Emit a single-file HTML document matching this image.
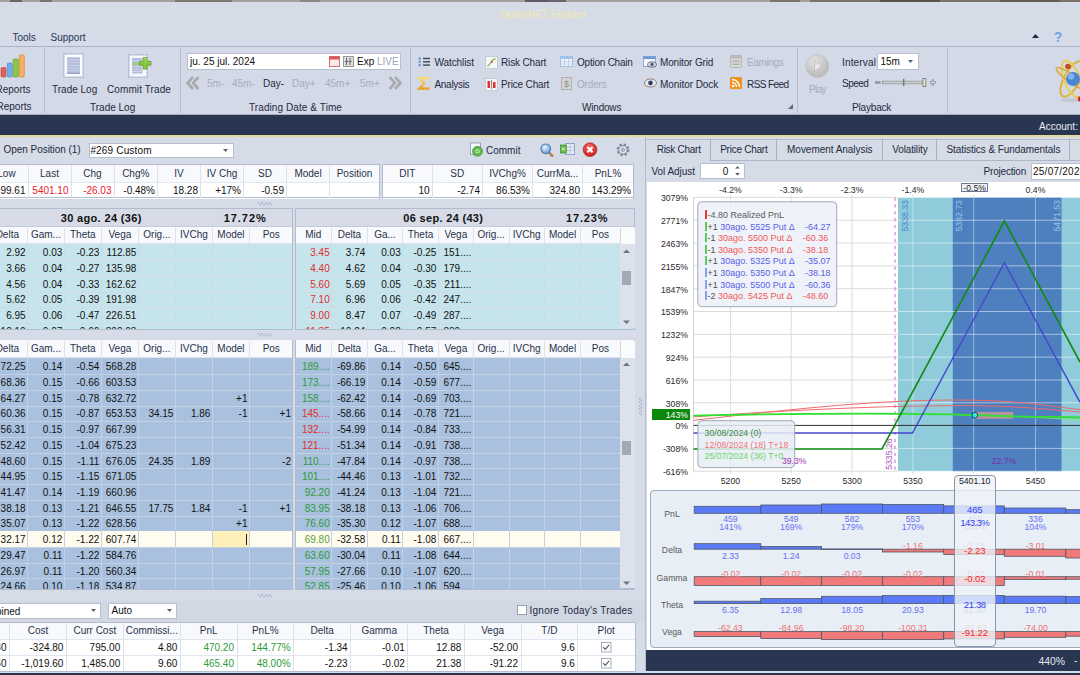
<!DOCTYPE html><html><head><meta charset="utf-8"><style>
html,body{margin:0;padding:0;}
body{width:1080px;height:675px;overflow:hidden;position:relative;background:#d5dbe7;font-family:"Liberation Sans",sans-serif;}
.t{position:absolute;white-space:nowrap;}
.r{position:absolute;}
.box{position:absolute;box-sizing:border-box;}
svg{position:absolute;overflow:visible;}
</style></head><body>
<div class="r" style="left:0.00px;top:0.00px;width:1080.00px;height:2.00px;background:#a3a19b;"></div>
<div class="r" style="left:10.00px;top:0.00px;width:12.00px;height:2.00px;background:#6a6862;"></div>
<div class="r" style="left:40.00px;top:0.00px;width:12.00px;height:2.00px;background:#77756f;"></div>
<div class="r" style="left:175.00px;top:0.00px;width:57.00px;height:2.00px;background:#7a7670;"></div>
<div class="r" style="left:300.00px;top:0.00px;width:20.00px;height:2.00px;background:#8a8882;"></div>
<div class="r" style="left:525.00px;top:0.00px;width:23.00px;height:2.00px;background:#5e5866;"></div>
<div class="r" style="left:548.00px;top:0.00px;width:18.00px;height:2.00px;background:#6a6470;"></div>
<div class="r" style="left:770.00px;top:0.00px;width:30.00px;height:2.00px;background:#7a746c;"></div>
<div class="r" style="left:810.00px;top:0.00px;width:270.00px;height:2.00px;background:#7c7268;"></div>
<div class="r" style="left:880.00px;top:0.00px;width:60.00px;height:2.00px;background:#5a524c;"></div>
<div class="r" style="left:1000.00px;top:0.00px;width:60.00px;height:2.00px;background:#645c56;"></div>
<div class="t" style="left:343.00px;width:400px;text-align:center;top:9.70px;font-size:10px;line-height:10px;color:#f1e9ad;font-weight:normal;letter-spacing:-0.144px;">OptionNET Explorer</div>
<div class="t" style="left:12.50px;top:33.20px;font-size:10px;line-height:10px;color:#2a3653;font-weight:normal;">Tools</div>
<div class="t" style="left:50.50px;top:33.20px;font-size:10px;line-height:10px;color:#2a3653;font-weight:normal;">Support</div>
<svg style="left:1032px;top:34px" width="8" height="5"><path d="M0 4 L3.5 0 L7 4Z" fill="#1c2a48"/></svg>
<svg style="left:1052px;top:30px" width="12" height="14"><text x="6" y="12" font-family="Liberation Sans" font-weight="bold" font-size="14" text-anchor="middle" fill="#6fa8e0">?</text></svg>
<div class="r" style="left:0.00px;top:46.00px;width:1080.00px;height:1.00px;background:#aab3c4;"></div>
<div class="r" style="left:0.00px;top:47.00px;width:1080.00px;height:67.00px;background:#d3d9e6;"></div>
<div class="r" style="left:0.00px;top:114.00px;width:1080.00px;height:1.00px;background:#a7afbe;"></div>
<div class="r" style="left:44.00px;top:48.00px;width:1.00px;height:65.00px;background:#b4bccb;"></div>
<div class="r" style="left:180.00px;top:48.00px;width:1.00px;height:65.00px;background:#b4bccb;"></div>
<div class="r" style="left:410.00px;top:48.00px;width:1.00px;height:65.00px;background:#b4bccb;"></div>
<div class="r" style="left:797.00px;top:48.00px;width:1.00px;height:65.00px;background:#b4bccb;"></div>
<div class="r" style="left:947.00px;top:48.00px;width:1.00px;height:65.00px;background:#b4bccb;"></div>
<svg style="left:0;top:54px" width="26" height="25">
<rect x="1" y="13.5" width="5" height="9.5" rx="1" fill="#e0605a" stroke="#c04840" stroke-width="0.6"/>
<rect x="7.2" y="9" width="5" height="14" rx="1" fill="#70aee8" stroke="#4a86c8" stroke-width="0.6"/>
<rect x="13.3" y="5" width="5" height="18" rx="1" fill="#8cc84a" stroke="#5a9a2a" stroke-width="0.6"/>
<rect x="19.3" y="1" width="5" height="22" rx="1" fill="#f4b060" stroke="#d08030" stroke-width="0.6"/>
</svg>
<div class="t" style="left:-4.50px;top:84.70px;font-size:10px;line-height:10px;color:#1f2a40;font-weight:normal;">Reports</div>
<div class="t" style="left:-3.50px;top:102.20px;font-size:10px;line-height:10px;color:#1f2a40;font-weight:normal;">Reports</div>
<svg style="left:63px;top:53px" width="22" height="26">
<rect x="0.75" y="0.75" width="19.5" height="23.5" fill="#fafbfe" stroke="#b9c2d8" stroke-width="1.5"/>
<rect x="4" y="4.3" width="13" height="16.5" fill="#b3bdd9"/>
<g fill="#d4daea"><rect x="4" y="6.6" width="13" height="0.8"/><rect x="4" y="9.3" width="13" height="0.8"/><rect x="4" y="12" width="13" height="0.8"/><rect x="4" y="14.7" width="13" height="0.8"/><rect x="4" y="17.4" width="13" height="0.8"/></g>
<rect x="4" y="19.8" width="13" height="1" fill="#8f9cc4"/>
</svg>
<div class="t" style="left:52.00px;top:85.20px;font-size:10px;line-height:10px;color:#1f2a40;font-weight:normal;">Trade Log</div>
<svg style="left:128px;top:54px" width="26" height="24">
<rect x="0.75" y="0.75" width="18.5" height="22.5" fill="#f6f8fc" stroke="#b9c2d8" stroke-width="1.5"/>
<rect x="4" y="4" width="10.5" height="15.5" fill="#b3bdd9"/>
<g fill="#d4daea"><rect x="4" y="6.5" width="10.5" height="0.8"/><rect x="4" y="12" width="10.5" height="0.8"/><rect x="4" y="14.7" width="10.5" height="0.8"/><rect x="4" y="17.2" width="10.5" height="0.8"/></g>
<rect x="4" y="9" width="9" height="1.8" fill="#98d060"/>
<path d="M15.3 3.5h3.8v3.9h3.9v3.8h-3.9v3.9h-3.8v-3.9h-3.9v-3.8h3.9z" fill="#86c83e" stroke="#5e9c28" stroke-width="0.8" stroke-linejoin="round"/>
<path d="M16 4.5h2.2v3.6" fill="none" stroke="#c4ec90" stroke-width="0.8"/>
</svg>
<div class="t" style="left:107.00px;top:85.20px;font-size:10px;line-height:10px;color:#1f2a40;font-weight:normal;letter-spacing:0.101px;">Commit Trade</div>
<div class="t" style="left:90.00px;top:102.70px;font-size:10px;line-height:10px;color:#1f2a40;font-weight:normal;">Trade Log</div>
<div class="box" style="left:186.5px;top:53px;width:214px;height:17px;background:#fff;border:1px solid #b8c0d0"></div>
<div class="t" style="left:190.00px;top:57.20px;font-size:10px;line-height:10px;color:#111;font-weight:normal;">ju. 25 jul. 2024</div>
<svg style="left:329px;top:56px" width="12" height="11"><rect x="0.5" y="0.5" width="10" height="10" fill="#fbeaea" stroke="#d07070"/><rect x="0.5" y="0.5" width="10" height="3" fill="#e05858"/></svg>
<svg style="left:343px;top:56px" width="11" height="11"><rect x="0.5" y="0.5" width="10" height="10" fill="#ddd" stroke="#999"/><path d="M3.5 2v7M7 2v7M2 5.5h3M5.5 5.5h3" stroke="#666"/></svg>
<div class="t" style="left:357.00px;top:57.20px;font-size:10px;line-height:10px;color:#111;font-weight:normal;">Exp</div>
<div class="t" style="left:377.00px;top:57.20px;font-size:10px;line-height:10px;color:#9aa4b8;font-weight:normal;">LIVE</div>
<svg style="left:186px;top:76px" width="14" height="14"><path d="M7 1L1.5 7L7 13M12.5 1L7 7L12.5 13" fill="none" stroke="#a9aaae" stroke-width="2.6" stroke-linejoin="miter"/></svg>
<div class="t" style="left:207.00px;top:79.20px;font-size:10px;line-height:10px;color:#a6aec0;font-weight:normal;">5m-</div>
<div class="t" style="left:232.00px;top:79.20px;font-size:10px;line-height:10px;color:#a6aec0;font-weight:normal;">45m-</div>
<div class="t" style="left:263.00px;top:79.20px;font-size:10px;line-height:10px;color:#1f2a40;font-weight:normal;">Day-</div>
<div class="t" style="left:292.00px;top:79.20px;font-size:10px;line-height:10px;color:#a6aec0;font-weight:normal;">Day+</div>
<div class="t" style="left:325.00px;top:79.20px;font-size:10px;line-height:10px;color:#a6aec0;font-weight:normal;">45m+</div>
<div class="t" style="left:360.00px;top:79.20px;font-size:10px;line-height:10px;color:#a6aec0;font-weight:normal;">5m+</div>
<svg style="left:388px;top:76px" width="14" height="14"><path d="M1.5 1L7 7L1.5 13M7 1L12.5 7L7 13" fill="none" stroke="#a9aaae" stroke-width="2.6"/></svg>
<div class="t" style="left:249.00px;top:102.70px;font-size:10px;line-height:10px;color:#1f2a40;font-weight:normal;letter-spacing:0.088px;">Trading Date &amp; Time</div>
<svg style="left:418px;top:57px" width="14" height="10"><g fill="#6a9ad8"><circle cx="1.7" cy="1.5" r="1.3"/><circle cx="1.7" cy="4.8" r="1.3"/><circle cx="1.7" cy="8.1" r="1.3"/></g><g fill="#404858"><rect x="5" y="0.8" width="7" height="1.4"/><rect x="5" y="4.1" width="7" height="1.4"/><rect x="5" y="7.4" width="7" height="1.4"/></g></svg>
<div class="t" style="left:434.50px;top:57.70px;font-size:10px;line-height:10px;color:#1f2a40;font-weight:normal;letter-spacing:-0.088px;">Watchlist</div>
<svg style="left:418px;top:77px" width="13" height="13"><defs><linearGradient id="sg" x1="0" y1="0" x2="0" y2="1"><stop offset="0" stop-color="#fadc70"/><stop offset="1" stop-color="#eca028"/></linearGradient></defs><path d="M11.6 1.1H1.2L6.3 6.3L1.2 11.5H11.6" fill="none" stroke="url(#sg)" stroke-width="2.3" stroke-linejoin="miter"/></svg>
<div class="t" style="left:434.50px;top:79.70px;font-size:10px;line-height:10px;color:#1f2a40;font-weight:normal;letter-spacing:-0.304px;">Analysis</div>
<svg style="left:485px;top:56px" width="13" height="13"><rect x="0.5" y="0.5" width="12" height="12" fill="#f4f6f8" stroke="#c4cad6"/><path d="M2 10 Q4 10 5.5 7 T9 3 L11 3" fill="none" stroke="#70b050" stroke-width="1.1"/><circle cx="7" cy="6" r="0.9" fill="#e04040"/></svg>
<div class="t" style="left:501.00px;top:57.70px;font-size:10px;line-height:10px;color:#1f2a40;font-weight:normal;letter-spacing:-0.147px;">Risk Chart</div>
<svg style="left:485px;top:78px" width="13" height="13"><rect x="0.5" y="0.5" width="12" height="12" fill="#f4f6f8" stroke="#c4cad6"/><rect x="2.5" y="3" width="2.5" height="7" fill="#e03030"/><rect x="8" y="4" width="2.5" height="6" fill="#e03030"/><path d="M6.5 2v9" stroke="#888"/></svg>
<div class="t" style="left:501.00px;top:79.70px;font-size:10px;line-height:10px;color:#1f2a40;font-weight:normal;letter-spacing:-0.165px;">Price Chart</div>
<svg style="left:560px;top:56px" width="13" height="11"><rect x="0.5" y="0.5" width="12" height="10" fill="#f6f8fc" stroke="#a9bde0"/><rect x="0.5" y="0.5" width="12" height="2.5" fill="#9cc4ee"/><path d="M0.5 5.5h12M0.5 8h12M4.5 0.5v10M8.5 0.5v10" stroke="#b6c8e6" stroke-width="0.8"/></svg>
<div class="t" style="left:577.00px;top:57.70px;font-size:10px;line-height:10px;color:#1f2a40;font-weight:normal;letter-spacing:-0.230px;">Option Chain</div>
<svg style="left:561px;top:77px" width="11" height="13"><rect x="0.5" y="0.5" width="10" height="12" fill="#d4d4d4" stroke="#b0b0b0"/><text x="5.5" y="10" font-size="9" font-family="Liberation Sans" text-anchor="middle" fill="#909090">$</text></svg>
<div class="t" style="left:577.00px;top:79.70px;font-size:10px;line-height:10px;color:#a3abbe;font-weight:normal;letter-spacing:-0.160px;">Orders</div>
<svg style="left:643px;top:56px" width="14" height="12"><rect x="0.5" y="0.5" width="12" height="10" fill="#f4f6fa" stroke="#8fa8d0"/><rect x="0.5" y="0.5" width="12" height="2.5" fill="#6a98d8"/><ellipse cx="9" cy="8.5" rx="4.5" ry="2.6" fill="#c8d0e0" stroke="#50607a" stroke-width="0.8"/><circle cx="9" cy="8.5" r="1.4" fill="#40506a"/></svg>
<div class="t" style="left:660.00px;top:57.70px;font-size:10px;line-height:10px;color:#1f2a40;font-weight:normal;letter-spacing:-0.151px;">Monitor Grid</div>
<svg style="left:644px;top:78px" width="13" height="10"><ellipse cx="6.5" cy="5" rx="6" ry="4" fill="#e8ecf2" stroke="#8a7060" stroke-width="0.9"/><circle cx="6.5" cy="5" r="2.4" fill="#3a5478"/><circle cx="6.5" cy="5" r="1" fill="#102030"/></svg>
<div class="t" style="left:660.00px;top:79.70px;font-size:10px;line-height:10px;color:#1f2a40;font-weight:normal;letter-spacing:-0.059px;">Monitor Dock</div>
<svg style="left:730px;top:55px" width="12" height="13"><rect x="0.5" y="0.5" width="11" height="12" rx="1" fill="#d8d8d8" stroke="#b4b4b4"/><rect x="0.5" y="0.5" width="11" height="3" fill="#b8b8b8"/><g fill="#a8a8a8"><rect x="2.5" y="5.5" width="2" height="1.5"/><rect x="5" y="5.5" width="2" height="1.5"/><rect x="7.5" y="5.5" width="2" height="1.5"/><rect x="2.5" y="8.5" width="2" height="1.5"/><rect x="5" y="8.5" width="2" height="1.5"/><rect x="7.5" y="8.5" width="2" height="1.5"/></g></svg>
<div class="t" style="left:747.00px;top:58.20px;font-size:10px;line-height:10px;color:#a3abbe;font-weight:normal;letter-spacing:-0.396px;">Earnings</div>
<svg style="left:730px;top:77px" width="12" height="12"><rect x="0" y="0" width="12" height="12" rx="1.5" fill="#f0901c"/><circle cx="3" cy="9" r="1.3" fill="#fff"/><path d="M2 5.5a4.5 4.5 0 0 1 4.5 4.5M2 2.5a7.5 7.5 0 0 1 7.5 7.5" fill="none" stroke="#fff" stroke-width="1.4"/></svg>
<div class="t" style="left:747.00px;top:79.70px;font-size:10px;line-height:10px;color:#1f2a40;font-weight:normal;letter-spacing:-0.579px;">RSS Feed</div>
<div class="t" style="left:582.00px;top:102.70px;font-size:10px;line-height:10px;color:#1f2a40;font-weight:normal;letter-spacing:-0.195px;">Windows</div>
<svg style="left:788px;top:104px" width="6" height="6"><path d="M5 0V5H0z" fill="#5a6680"/></svg>
<svg style="left:805px;top:54px" width="25" height="25"><defs><radialGradient id="pg" cx="40%" cy="30%" r="75%"><stop offset="0" stop-color="#e4e4e4"/><stop offset="1" stop-color="#b4b4b4"/></radialGradient></defs><circle cx="12.2" cy="12" r="11.6" fill="url(#pg)" stroke="#c2c2c2" stroke-width="0.6"/><path d="M9.5 6.5L17 12L9.5 17.5z" fill="#e6e6e6" stroke="#b0b0b0" stroke-width="0.6"/></svg>
<div class="t" style="left:809.00px;top:85.20px;font-size:10px;line-height:10px;color:#a3abbe;font-weight:normal;letter-spacing:-0.613px;">Play</div>
<div class="t" style="left:842.00px;top:57.70px;font-size:10px;line-height:10px;color:#1f2a40;font-weight:normal;letter-spacing:0.151px;">Interval</div>
<div class="box" style="left:877px;top:53px;width:42px;height:17px;background:#fff;border:1px solid #b8c0d0"></div>
<div class="t" style="left:880.50px;top:57.20px;font-size:10px;line-height:10px;color:#111;font-weight:normal;">15m</div>
<svg style="left:908px;top:60px" width="6" height="4"><path d="M0 0h5L2.5 3z" fill="#5a6478"/></svg>
<div class="t" style="left:842.00px;top:79.20px;font-size:10px;line-height:10px;color:#1f2a40;font-weight:normal;letter-spacing:-0.543px;">Speed</div>
<svg style="left:872px;top:77px" width="66" height="12">
<rect x="3" y="4.3" width="5.5" height="2.4" fill="#8a92a4"/>
<rect x="10.5" y="4.2" width="42" height="2.6" fill="#d0d4c8" stroke="#868c98" stroke-width="0.7"/>
<rect x="31" y="1.8" width="1.4" height="7.4" fill="#70788a"/>
<rect x="51" y="1.5" width="2.8" height="8" fill="#f4eebc" stroke="#6a7284" stroke-width="0.8"/>
<path d="M57.8 5.5h6M60.8 2.5v6" stroke="#7a8294" stroke-width="2.2"/><path d="M58.6 5.5h4.4M60.8 3.3v4.4" stroke="#e8ecf2" stroke-width="0.8"/>
</svg>
<div class="t" style="left:852.00px;top:102.70px;font-size:10px;line-height:10px;color:#1f2a40;font-weight:normal;letter-spacing:-0.172px;">Playback</div>
<svg style="left:1046px;top:54px" width="36" height="48">
<ellipse cx="24" cy="46" rx="10" ry="2" fill="#b8bcc8" opacity="0.6"/>
<ellipse cx="26" cy="25" rx="8" ry="19.5" transform="rotate(28 26 25)" fill="none" stroke="#e0b43a" stroke-width="2"/>
<ellipse cx="26" cy="25" rx="8" ry="19.5" transform="rotate(-22 26 25)" fill="none" stroke="#eccb52" stroke-width="2"/>
<ellipse cx="26" cy="25" rx="4" ry="19" transform="rotate(-55 26 25)" fill="none" stroke="#d8aa30" stroke-width="1.5"/>
<circle cx="27" cy="25" r="7" fill="#4a86d4"/>
<circle cx="25" cy="22.5" r="3.2" fill="#9ccaf8" opacity="0.65"/>
<circle cx="22" cy="12.5" r="2.8" fill="#c44c22"/>
<circle cx="34.5" cy="45" r="2.8" fill="#e02030"/>
</svg>
<div class="r" style="left:0.00px;top:115.00px;width:1080.00px;height:20.00px;background:#283651;"></div>
<div class="r" style="left:0.00px;top:135.00px;width:1080.00px;height:2.00px;background:#e4d99c;"></div>
<div class="t" style="left:1039.00px;top:121.70px;font-size:10px;line-height:10px;color:#e8ecf4;font-weight:normal;">Account:</div>
<div class="t" style="left:3.60px;top:145.20px;font-size:10px;line-height:10px;color:#1f2a40;font-weight:normal;letter-spacing:-0.048px;">Open Position (1)</div>
<div class="box" style="left:88.5px;top:142.5px;width:145px;height:15.5px;background:#fff;border:1px solid #b8c0d0"></div>
<div class="t" style="left:90.40px;top:145.70px;font-size:10px;line-height:10px;color:#111;font-weight:normal;letter-spacing:0.166px;">#269 Custom</div>
<svg style="left:223px;top:148.5px" width="6" height="4"><path d="M0 0h5L2.5 3z" fill="#5a6478"/></svg>
<svg style="left:469px;top:142px" width="16" height="16"><rect x="1.5" y="1" width="10" height="11.5" fill="#f4f6fa" stroke="#9aa6c0"/><circle cx="8.5" cy="9.3" r="5" fill="#5cb848" stroke="#3a8a30" stroke-width="0.6"/><circle cx="8.5" cy="9.3" r="2.3" fill="#b8e8a0"/><circle cx="8.5" cy="9.3" r="1.1" fill="#5cb848"/></svg>
<div class="t" style="left:486.00px;top:146.20px;font-size:10px;line-height:10px;color:#1f2a40;font-weight:normal;">Commit</div>
<svg style="left:539px;top:142px" width="16" height="16"><defs><radialGradient id="lg" cx="40%" cy="35%" r="70%"><stop offset="0" stop-color="#e8f4ff"/><stop offset="1" stop-color="#5a9ad8"/></radialGradient></defs><path d="M10 10.5L13.2 13.8" stroke="#b87a3a" stroke-width="2.4" stroke-linecap="round"/><circle cx="6.8" cy="6.8" r="4.8" fill="url(#lg)" stroke="#4a7ab0" stroke-width="1.1"/></svg>
<svg style="left:560px;top:143px" width="16" height="13"><rect x="5.5" y="0.5" width="9" height="11" fill="#e8eef8" stroke="#8ea4c8"/><path d="M5.5 4h9M5.5 7.5h9M10 0.5v11" stroke="#aabad8" stroke-width="0.8"/><rect x="0.5" y="2" width="6" height="8" fill="#6cb84a" stroke="#3e8a2e" stroke-width="0.7"/><path d="M2 4.5l3 3M5 4.5l-3 3" stroke="#e8ffe0" stroke-width="0.9"/></svg>
<svg style="left:582px;top:142px" width="16" height="16"><defs><radialGradient id="xg" cx="45%" cy="35%" r="65%"><stop offset="0" stop-color="#f87070"/><stop offset="1" stop-color="#c81a1a"/></radialGradient></defs><circle cx="8" cy="7.7" r="6.9" fill="url(#xg)" stroke="#b01818" stroke-width="0.6"/><path d="M5.4 5.1l5.2 5.2M10.6 5.1l-5.2 5.2" stroke="#fff" stroke-width="2.1"/></svg>
<svg style="left:616px;top:143px" width="14" height="14"><circle cx="7" cy="6.8" r="4.9" fill="none" stroke="#7c869a" stroke-width="3" stroke-dasharray="2.1 1.75"/><circle cx="7" cy="6.8" r="4.1" fill="#e4e8f0" stroke="#7c869a" stroke-width="0.9"/><circle cx="7" cy="6.8" r="1.7" fill="#c0c8d6" stroke="#7c869a" stroke-width="0.7"/></svg>
<div class="r" style="left:-5.00px;top:164.00px;width:384.50px;height:34.50px;background:#ffffff;"></div>
<div class="r" style="left:-5.00px;top:164.00px;width:384.50px;height:18.50px;background:#f8f9fc;"></div>
<div class="r" style="left:-5.00px;top:164.00px;width:384.50px;height:1.00px;background:#b2bccc;"></div>
<div class="r" style="left:-5.00px;top:182.00px;width:384.50px;height:1.00px;background:#e2e6ee;"></div>
<div class="r" style="left:-5.00px;top:197.00px;width:384.50px;height:1.00px;background:#b2bccc;"></div>
<div class="r" style="left:379.00px;top:164.00px;width:1.00px;height:34.50px;background:#b2bccc;"></div>
<div class="r" style="left:28.00px;top:165.00px;width:1.00px;height:32.50px;background:#dde2ea;"></div>
<div class="r" style="left:71.00px;top:165.00px;width:1.00px;height:32.50px;background:#dde2ea;"></div>
<div class="r" style="left:114.00px;top:165.00px;width:1.00px;height:32.50px;background:#dde2ea;"></div>
<div class="r" style="left:157.00px;top:165.00px;width:1.00px;height:32.50px;background:#dde2ea;"></div>
<div class="r" style="left:200.00px;top:165.00px;width:1.00px;height:32.50px;background:#dde2ea;"></div>
<div class="r" style="left:243.00px;top:165.00px;width:1.00px;height:32.50px;background:#dde2ea;"></div>
<div class="r" style="left:286.00px;top:165.00px;width:1.00px;height:32.50px;background:#dde2ea;"></div>
<div class="r" style="left:329.00px;top:165.00px;width:1.00px;height:32.50px;background:#dde2ea;"></div>
<div class="t" style="left:-193.50px;width:400px;text-align:center;top:169.05px;font-size:10px;line-height:10px;color:#27324a;font-weight:normal;">Low</div>
<div class="t" style="left:-150.50px;width:400px;text-align:center;top:169.05px;font-size:10px;line-height:10px;color:#27324a;font-weight:normal;">Last</div>
<div class="t" style="left:-107.50px;width:400px;text-align:center;top:169.05px;font-size:10px;line-height:10px;color:#27324a;font-weight:normal;">Chg</div>
<div class="t" style="left:-64.25px;width:400px;text-align:center;top:169.05px;font-size:10px;line-height:10px;color:#27324a;font-weight:normal;">Chg%</div>
<div class="t" style="left:-21.00px;width:400px;text-align:center;top:169.05px;font-size:10px;line-height:10px;color:#27324a;font-weight:normal;">IV</div>
<div class="t" style="left:22.00px;width:400px;text-align:center;top:169.05px;font-size:10px;line-height:10px;color:#27324a;font-weight:normal;">IV Chg</div>
<div class="t" style="left:65.00px;width:400px;text-align:center;top:169.05px;font-size:10px;line-height:10px;color:#27324a;font-weight:normal;">SD</div>
<div class="t" style="left:108.00px;width:400px;text-align:center;top:169.05px;font-size:10px;line-height:10px;color:#27324a;font-weight:normal;">Model</div>
<div class="t" style="left:154.50px;width:400px;text-align:center;top:169.05px;font-size:10px;line-height:10px;color:#27324a;font-weight:normal;">Position</div>
<div class="t" style="left:-374.50px;width:400px;text-align:right;top:186.10px;font-size:10px;line-height:10px;color:#111;font-weight:normal;">99.61</div>
<div class="t" style="left:-331.50px;width:400px;text-align:right;top:186.10px;font-size:10px;line-height:10px;color:#e8202a;font-weight:normal;">5401.10</div>
<div class="t" style="left:-288.50px;width:400px;text-align:right;top:186.10px;font-size:10px;line-height:10px;color:#e8202a;font-weight:normal;">-26.03</div>
<div class="t" style="left:-245.00px;width:400px;text-align:right;top:186.10px;font-size:10px;line-height:10px;color:#111;font-weight:normal;">-0.48%</div>
<div class="t" style="left:-202.00px;width:400px;text-align:right;top:186.10px;font-size:10px;line-height:10px;color:#111;font-weight:normal;">18.28</div>
<div class="t" style="left:-159.00px;width:400px;text-align:right;top:186.10px;font-size:10px;line-height:10px;color:#111;font-weight:normal;">+17%</div>
<div class="t" style="left:-116.00px;width:400px;text-align:right;top:186.10px;font-size:10px;line-height:10px;color:#111;font-weight:normal;">-0.59</div>
<div class="t" style="left:-73.00px;width:400px;text-align:right;top:186.10px;font-size:10px;line-height:10px;color:#111;font-weight:normal;"></div>
<div class="t" style="left:-23.00px;width:400px;text-align:right;top:186.10px;font-size:10px;line-height:10px;color:#111;font-weight:normal;"></div>
<div class="r" style="left:382.50px;top:164.00px;width:251.00px;height:34.50px;background:#ffffff;"></div>
<div class="r" style="left:382.50px;top:164.00px;width:251.00px;height:18.50px;background:#f8f9fc;"></div>
<div class="r" style="left:382.50px;top:164.00px;width:251.00px;height:1.00px;background:#b2bccc;"></div>
<div class="r" style="left:382.50px;top:182.00px;width:251.00px;height:1.00px;background:#e2e6ee;"></div>
<div class="r" style="left:382.50px;top:197.00px;width:251.00px;height:1.00px;background:#b2bccc;"></div>
<div class="r" style="left:633.00px;top:164.00px;width:1.00px;height:34.50px;background:#b2bccc;"></div>
<div class="r" style="left:432.00px;top:165.00px;width:1.00px;height:32.50px;background:#dde2ea;"></div>
<div class="r" style="left:482.00px;top:165.00px;width:1.00px;height:32.50px;background:#dde2ea;"></div>
<div class="r" style="left:532.00px;top:165.00px;width:1.00px;height:32.50px;background:#dde2ea;"></div>
<div class="r" style="left:582.00px;top:165.00px;width:1.00px;height:32.50px;background:#dde2ea;"></div>
<div class="t" style="left:207.25px;width:400px;text-align:center;top:169.05px;font-size:10px;line-height:10px;color:#27324a;font-weight:normal;">DIT</div>
<div class="t" style="left:257.25px;width:400px;text-align:center;top:169.05px;font-size:10px;line-height:10px;color:#27324a;font-weight:normal;">SD</div>
<div class="t" style="left:307.50px;width:400px;text-align:center;top:169.05px;font-size:10px;line-height:10px;color:#27324a;font-weight:normal;">IVChg%</div>
<div class="t" style="left:357.50px;width:400px;text-align:center;top:169.05px;font-size:10px;line-height:10px;color:#27324a;font-weight:normal;">CurrMa...</div>
<div class="t" style="left:408.00px;width:400px;text-align:center;top:169.05px;font-size:10px;line-height:10px;color:#27324a;font-weight:normal;">PnL%</div>
<div class="t" style="left:29.50px;width:400px;text-align:right;top:186.10px;font-size:10px;line-height:10px;color:#111;font-weight:normal;">10</div>
<div class="t" style="left:80.00px;width:400px;text-align:right;top:186.10px;font-size:10px;line-height:10px;color:#111;font-weight:normal;">-2.74</div>
<div class="t" style="left:130.00px;width:400px;text-align:right;top:186.10px;font-size:10px;line-height:10px;color:#111;font-weight:normal;">86.53%</div>
<div class="t" style="left:180.00px;width:400px;text-align:right;top:186.10px;font-size:10px;line-height:10px;color:#111;font-weight:normal;">324.80</div>
<div class="t" style="left:231.00px;width:400px;text-align:right;top:186.10px;font-size:10px;line-height:10px;color:#111;font-weight:normal;">143.29%</div>
<div class="r" style="left:382.00px;top:164.50px;width:1.00px;height:34.00px;background:#b2bccc;"></div>
<svg style="left:258px;top:201.5px" width="18" height="4"><g fill="#aab2c4"><rect x="0.0" y="0" width="1.5" height="1.5"/><rect x="1.7" y="1.8" width="1.5" height="1.5"/><rect x="3.5" y="0" width="1.5" height="1.5"/><rect x="5.2" y="1.8" width="1.5" height="1.5"/><rect x="7.0" y="0" width="1.5" height="1.5"/><rect x="8.7" y="1.8" width="1.5" height="1.5"/><rect x="10.5" y="0" width="1.5" height="1.5"/><rect x="12.2" y="1.8" width="1.5" height="1.5"/></g></svg>
<svg style="left:258px;top:332.5px" width="18" height="4"><g fill="#aab2c4"><rect x="0.0" y="0" width="1.5" height="1.5"/><rect x="1.7" y="1.8" width="1.5" height="1.5"/><rect x="3.5" y="0" width="1.5" height="1.5"/><rect x="5.2" y="1.8" width="1.5" height="1.5"/><rect x="7.0" y="0" width="1.5" height="1.5"/><rect x="8.7" y="1.8" width="1.5" height="1.5"/><rect x="10.5" y="0" width="1.5" height="1.5"/><rect x="12.2" y="1.8" width="1.5" height="1.5"/></g></svg>
<svg style="left:258px;top:593.5px" width="18" height="4"><g fill="#aab2c4"><rect x="0.0" y="0" width="1.5" height="1.5"/><rect x="1.7" y="1.8" width="1.5" height="1.5"/><rect x="3.5" y="0" width="1.5" height="1.5"/><rect x="5.2" y="1.8" width="1.5" height="1.5"/><rect x="7.0" y="0" width="1.5" height="1.5"/><rect x="8.7" y="1.8" width="1.5" height="1.5"/><rect x="10.5" y="0" width="1.5" height="1.5"/><rect x="12.2" y="1.8" width="1.5" height="1.5"/></g></svg>
<div class="r" style="left:-1.00px;top:208.30px;width:294.00px;height:121.20px;background:#c6e4eb;"></div>
<div class="r" style="left:-1.00px;top:208.30px;width:294.00px;height:18.40px;background:#d6dbe7;"></div>
<div class="r" style="left:-1.00px;top:208.00px;width:294.00px;height:1.00px;background:#b2bccc;"></div>
<div class="r" style="left:-1.00px;top:225.50px;width:294.00px;height:1.00px;background:#c4cbd8;"></div>
<div class="t" style="left:-98.80px;width:400px;text-align:center;top:212.70px;font-size:11px;line-height:11px;color:#111;font-weight:bold;letter-spacing:0.346px;">30 ago. 24 (36)</div>
<div class="t" style="left:45.20px;width:400px;text-align:center;top:212.70px;font-size:11px;line-height:11px;color:#111;font-weight:bold;letter-spacing:0.949px;">17.72%</div>
<div class="r" style="left:-1.00px;top:226.70px;width:294.00px;height:17.70px;background:#f8f9fc;"></div>
<div class="r" style="left:-1.00px;top:243.00px;width:294.00px;height:1.00px;background:#dde2ea;"></div>
<div class="r" style="left:-1px;top:244.4px;width:294px;height:85.1px;overflow:hidden">
<div class="r" style="left:0;top:15.72px;width:294px;height:1px;background:#cfdae3"></div>
<div class="t" style="left:-273.40px;width:300px;text-align:right;top:3.86px;font-size:10px;line-height:10px;color:#111">2.92</div>
<div class="t" style="left:-236.70px;width:300px;text-align:right;top:3.86px;font-size:10px;line-height:10px;color:#111">0.03</div>
<div class="t" style="left:-199.70px;width:300px;text-align:right;top:3.86px;font-size:10px;line-height:10px;color:#111">-0.23</div>
<div class="t" style="left:-162.60px;width:300px;text-align:right;top:3.86px;font-size:10px;line-height:10px;color:#111">112.85</div>
<div class="r" style="left:0;top:31.44px;width:294px;height:1px;background:#cfdae3"></div>
<div class="t" style="left:-273.40px;width:300px;text-align:right;top:19.58px;font-size:10px;line-height:10px;color:#111">3.66</div>
<div class="t" style="left:-236.70px;width:300px;text-align:right;top:19.58px;font-size:10px;line-height:10px;color:#111">0.04</div>
<div class="t" style="left:-199.70px;width:300px;text-align:right;top:19.58px;font-size:10px;line-height:10px;color:#111">-0.27</div>
<div class="t" style="left:-162.60px;width:300px;text-align:right;top:19.58px;font-size:10px;line-height:10px;color:#111">135.98</div>
<div class="r" style="left:0;top:47.16px;width:294px;height:1px;background:#cfdae3"></div>
<div class="t" style="left:-273.40px;width:300px;text-align:right;top:35.30px;font-size:10px;line-height:10px;color:#111">4.56</div>
<div class="t" style="left:-236.70px;width:300px;text-align:right;top:35.30px;font-size:10px;line-height:10px;color:#111">0.04</div>
<div class="t" style="left:-199.70px;width:300px;text-align:right;top:35.30px;font-size:10px;line-height:10px;color:#111">-0.33</div>
<div class="t" style="left:-162.60px;width:300px;text-align:right;top:35.30px;font-size:10px;line-height:10px;color:#111">162.62</div>
<div class="r" style="left:0;top:62.88px;width:294px;height:1px;background:#cfdae3"></div>
<div class="t" style="left:-273.40px;width:300px;text-align:right;top:51.02px;font-size:10px;line-height:10px;color:#111">5.62</div>
<div class="t" style="left:-236.70px;width:300px;text-align:right;top:51.02px;font-size:10px;line-height:10px;color:#111">0.05</div>
<div class="t" style="left:-199.70px;width:300px;text-align:right;top:51.02px;font-size:10px;line-height:10px;color:#111">-0.39</div>
<div class="t" style="left:-162.60px;width:300px;text-align:right;top:51.02px;font-size:10px;line-height:10px;color:#111">191.98</div>
<div class="r" style="left:0;top:78.60px;width:294px;height:1px;background:#cfdae3"></div>
<div class="t" style="left:-273.40px;width:300px;text-align:right;top:66.74px;font-size:10px;line-height:10px;color:#111">6.95</div>
<div class="t" style="left:-236.70px;width:300px;text-align:right;top:66.74px;font-size:10px;line-height:10px;color:#111">0.06</div>
<div class="t" style="left:-199.70px;width:300px;text-align:right;top:66.74px;font-size:10px;line-height:10px;color:#111">-0.47</div>
<div class="t" style="left:-162.60px;width:300px;text-align:right;top:66.74px;font-size:10px;line-height:10px;color:#111">226.51</div>
<div class="r" style="left:0;top:94.32px;width:294px;height:1px;background:#cfdae3"></div>
<div class="t" style="left:-273.40px;width:300px;text-align:right;top:82.46px;font-size:10px;line-height:10px;color:#111">10.10</div>
<div class="t" style="left:-236.70px;width:300px;text-align:right;top:82.46px;font-size:10px;line-height:10px;color:#111">0.07</div>
<div class="t" style="left:-199.70px;width:300px;text-align:right;top:82.46px;font-size:10px;line-height:10px;color:#111">-0.66</div>
<div class="t" style="left:-162.60px;width:300px;text-align:right;top:82.46px;font-size:10px;line-height:10px;color:#111">300.03</div>
</div>
<div class="r" style="left:27.00px;top:227.70px;width:1.00px;height:16.70px;background:#dde2ea;"></div>
<div class="r" style="left:64.00px;top:227.70px;width:1.00px;height:16.70px;background:#dde2ea;"></div>
<div class="r" style="left:101.00px;top:227.70px;width:1.00px;height:16.70px;background:#dde2ea;"></div>
<div class="r" style="left:138.00px;top:227.70px;width:1.00px;height:16.70px;background:#dde2ea;"></div>
<div class="r" style="left:175.00px;top:227.70px;width:1.00px;height:16.70px;background:#dde2ea;"></div>
<div class="r" style="left:212.00px;top:227.70px;width:1.00px;height:16.70px;background:#dde2ea;"></div>
<div class="r" style="left:249.00px;top:227.70px;width:1.00px;height:16.70px;background:#dde2ea;"></div>
<div class="r" style="left:27.00px;top:244.40px;width:1.00px;height:85.10px;background:#cfdae3;"></div>
<div class="r" style="left:64.00px;top:244.40px;width:1.00px;height:85.10px;background:#cfdae3;"></div>
<div class="r" style="left:101.00px;top:244.40px;width:1.00px;height:85.10px;background:#cfdae3;"></div>
<div class="r" style="left:138.00px;top:244.40px;width:1.00px;height:85.10px;background:#cfdae3;"></div>
<div class="r" style="left:175.00px;top:244.40px;width:1.00px;height:85.10px;background:#cfdae3;"></div>
<div class="r" style="left:212.00px;top:244.40px;width:1.00px;height:85.10px;background:#cfdae3;"></div>
<div class="r" style="left:249.00px;top:244.40px;width:1.00px;height:85.10px;background:#cfdae3;"></div>
<div class="t" style="left:-192.70px;width:400px;text-align:center;top:230.35px;font-size:10px;line-height:10px;color:#27324a;font-weight:normal;">Delta</div>
<div class="t" style="left:-154.05px;width:400px;text-align:center;top:230.35px;font-size:10px;line-height:10px;color:#27324a;font-weight:normal;">Gam...</div>
<div class="t" style="left:-117.20px;width:400px;text-align:center;top:230.35px;font-size:10px;line-height:10px;color:#27324a;font-weight:normal;">Theta</div>
<div class="t" style="left:-80.15px;width:400px;text-align:center;top:230.35px;font-size:10px;line-height:10px;color:#27324a;font-weight:normal;">Vega</div>
<div class="t" style="left:-43.10px;width:400px;text-align:center;top:230.35px;font-size:10px;line-height:10px;color:#27324a;font-weight:normal;">Orig...</div>
<div class="t" style="left:-6.10px;width:400px;text-align:center;top:230.35px;font-size:10px;line-height:10px;color:#27324a;font-weight:normal;">IVChg</div>
<div class="t" style="left:30.95px;width:400px;text-align:center;top:230.35px;font-size:10px;line-height:10px;color:#27324a;font-weight:normal;">Model</div>
<div class="t" style="left:71.25px;width:400px;text-align:center;top:230.35px;font-size:10px;line-height:10px;color:#27324a;font-weight:normal;">Pos</div>
<div class="r" style="left:-1.00px;top:329.00px;width:294.00px;height:1.00px;background:#b2bccc;"></div>
<div class="r" style="left:292.00px;top:208.30px;width:1.00px;height:121.20px;background:#b2bccc;"></div>
<div class="r" style="left:295.00px;top:208.30px;width:340.00px;height:121.20px;background:#c6e4eb;"></div>
<div class="r" style="left:295.00px;top:208.30px;width:340.00px;height:18.40px;background:#d6dbe7;"></div>
<div class="r" style="left:295.00px;top:208.00px;width:340.00px;height:1.00px;background:#b2bccc;"></div>
<div class="r" style="left:295.00px;top:225.50px;width:340.00px;height:1.00px;background:#c4cbd8;"></div>
<div class="t" style="left:243.30px;width:400px;text-align:center;top:212.70px;font-size:11px;line-height:11px;color:#111;font-weight:bold;letter-spacing:0.320px;">06 sep. 24 (43)</div>
<div class="t" style="left:387.20px;width:400px;text-align:center;top:212.70px;font-size:11px;line-height:11px;color:#111;font-weight:bold;letter-spacing:0.832px;">17.23%</div>
<div class="r" style="left:295.00px;top:226.70px;width:340.00px;height:17.70px;background:#f8f9fc;"></div>
<div class="r" style="left:295.00px;top:243.00px;width:340.00px;height:1.00px;background:#dde2ea;"></div>
<div class="r" style="left:295px;top:244.4px;width:340px;height:85.1px;overflow:hidden">
<div class="r" style="left:0;top:15.72px;width:325px;height:1px;background:#cfdae3"></div>
<div class="t" style="left:-265.30px;width:300px;text-align:right;top:3.86px;font-size:10px;line-height:10px;color:#e52a2a">3.45</div>
<div class="t" style="left:-229.70px;width:300px;text-align:right;top:3.86px;font-size:10px;line-height:10px;color:#111">3.74</div>
<div class="t" style="left:-194.30px;width:300px;text-align:right;top:3.86px;font-size:10px;line-height:10px;color:#111">0.03</div>
<div class="t" style="left:-158.70px;width:300px;text-align:right;top:3.86px;font-size:10px;line-height:10px;color:#111">-0.25</div>
<div class="t" style="left:-123.70px;width:300px;text-align:right;top:3.86px;font-size:10px;line-height:10px;color:#111">151....</div>
<div class="r" style="left:0;top:31.44px;width:325px;height:1px;background:#cfdae3"></div>
<div class="t" style="left:-265.30px;width:300px;text-align:right;top:19.58px;font-size:10px;line-height:10px;color:#e52a2a">4.40</div>
<div class="t" style="left:-229.70px;width:300px;text-align:right;top:19.58px;font-size:10px;line-height:10px;color:#111">4.62</div>
<div class="t" style="left:-194.30px;width:300px;text-align:right;top:19.58px;font-size:10px;line-height:10px;color:#111">0.04</div>
<div class="t" style="left:-158.70px;width:300px;text-align:right;top:19.58px;font-size:10px;line-height:10px;color:#111">-0.30</div>
<div class="t" style="left:-123.70px;width:300px;text-align:right;top:19.58px;font-size:10px;line-height:10px;color:#111">179....</div>
<div class="r" style="left:0;top:47.16px;width:325px;height:1px;background:#cfdae3"></div>
<div class="t" style="left:-265.30px;width:300px;text-align:right;top:35.30px;font-size:10px;line-height:10px;color:#e52a2a">5.60</div>
<div class="t" style="left:-229.70px;width:300px;text-align:right;top:35.30px;font-size:10px;line-height:10px;color:#111">5.69</div>
<div class="t" style="left:-194.30px;width:300px;text-align:right;top:35.30px;font-size:10px;line-height:10px;color:#111">0.05</div>
<div class="t" style="left:-158.70px;width:300px;text-align:right;top:35.30px;font-size:10px;line-height:10px;color:#111">-0.35</div>
<div class="t" style="left:-123.70px;width:300px;text-align:right;top:35.30px;font-size:10px;line-height:10px;color:#111">211....</div>
<div class="r" style="left:0;top:62.88px;width:325px;height:1px;background:#cfdae3"></div>
<div class="t" style="left:-265.30px;width:300px;text-align:right;top:51.02px;font-size:10px;line-height:10px;color:#e52a2a">7.10</div>
<div class="t" style="left:-229.70px;width:300px;text-align:right;top:51.02px;font-size:10px;line-height:10px;color:#111">6.96</div>
<div class="t" style="left:-194.30px;width:300px;text-align:right;top:51.02px;font-size:10px;line-height:10px;color:#111">0.06</div>
<div class="t" style="left:-158.70px;width:300px;text-align:right;top:51.02px;font-size:10px;line-height:10px;color:#111">-0.42</div>
<div class="t" style="left:-123.70px;width:300px;text-align:right;top:51.02px;font-size:10px;line-height:10px;color:#111">247....</div>
<div class="r" style="left:0;top:78.60px;width:325px;height:1px;background:#cfdae3"></div>
<div class="t" style="left:-265.30px;width:300px;text-align:right;top:66.74px;font-size:10px;line-height:10px;color:#e52a2a">9.00</div>
<div class="t" style="left:-229.70px;width:300px;text-align:right;top:66.74px;font-size:10px;line-height:10px;color:#111">8.47</div>
<div class="t" style="left:-194.30px;width:300px;text-align:right;top:66.74px;font-size:10px;line-height:10px;color:#111">0.07</div>
<div class="t" style="left:-158.70px;width:300px;text-align:right;top:66.74px;font-size:10px;line-height:10px;color:#111">-0.49</div>
<div class="t" style="left:-123.70px;width:300px;text-align:right;top:66.74px;font-size:10px;line-height:10px;color:#111">287....</div>
<div class="r" style="left:0;top:94.32px;width:325px;height:1px;background:#cfdae3"></div>
<div class="t" style="left:-265.30px;width:300px;text-align:right;top:82.46px;font-size:10px;line-height:10px;color:#e52a2a">11.35</div>
<div class="t" style="left:-229.70px;width:300px;text-align:right;top:82.46px;font-size:10px;line-height:10px;color:#111">10.24</div>
<div class="t" style="left:-194.30px;width:300px;text-align:right;top:82.46px;font-size:10px;line-height:10px;color:#111">0.08</div>
<div class="t" style="left:-158.70px;width:300px;text-align:right;top:82.46px;font-size:10px;line-height:10px;color:#111">-0.57</div>
<div class="t" style="left:-123.70px;width:300px;text-align:right;top:82.46px;font-size:10px;line-height:10px;color:#111">330....</div>
</div>
<div class="r" style="left:331.00px;top:227.70px;width:1.00px;height:16.70px;background:#dde2ea;"></div>
<div class="r" style="left:367.00px;top:227.70px;width:1.00px;height:16.70px;background:#dde2ea;"></div>
<div class="r" style="left:402.00px;top:227.70px;width:1.00px;height:16.70px;background:#dde2ea;"></div>
<div class="r" style="left:438.00px;top:227.70px;width:1.00px;height:16.70px;background:#dde2ea;"></div>
<div class="r" style="left:473.00px;top:227.70px;width:1.00px;height:16.70px;background:#dde2ea;"></div>
<div class="r" style="left:509.00px;top:227.70px;width:1.00px;height:16.70px;background:#dde2ea;"></div>
<div class="r" style="left:544.00px;top:227.70px;width:1.00px;height:16.70px;background:#dde2ea;"></div>
<div class="r" style="left:580.00px;top:227.70px;width:1.00px;height:16.70px;background:#dde2ea;"></div>
<div class="r" style="left:331.00px;top:244.40px;width:1.00px;height:85.10px;background:#cfdae3;"></div>
<div class="r" style="left:367.00px;top:244.40px;width:1.00px;height:85.10px;background:#cfdae3;"></div>
<div class="r" style="left:402.00px;top:244.40px;width:1.00px;height:85.10px;background:#cfdae3;"></div>
<div class="r" style="left:438.00px;top:244.40px;width:1.00px;height:85.10px;background:#cfdae3;"></div>
<div class="r" style="left:473.00px;top:244.40px;width:1.00px;height:85.10px;background:#cfdae3;"></div>
<div class="r" style="left:509.00px;top:244.40px;width:1.00px;height:85.10px;background:#cfdae3;"></div>
<div class="r" style="left:544.00px;top:244.40px;width:1.00px;height:85.10px;background:#cfdae3;"></div>
<div class="r" style="left:580.00px;top:244.40px;width:1.00px;height:85.10px;background:#cfdae3;"></div>
<div class="t" style="left:113.35px;width:400px;text-align:center;top:230.35px;font-size:10px;line-height:10px;color:#27324a;font-weight:normal;">Mid</div>
<div class="t" style="left:149.50px;width:400px;text-align:center;top:230.35px;font-size:10px;line-height:10px;color:#27324a;font-weight:normal;">Delta</div>
<div class="t" style="left:185.00px;width:400px;text-align:center;top:230.35px;font-size:10px;line-height:10px;color:#27324a;font-weight:normal;">Ga...</div>
<div class="t" style="left:220.50px;width:400px;text-align:center;top:230.35px;font-size:10px;line-height:10px;color:#27324a;font-weight:normal;">Theta</div>
<div class="t" style="left:255.80px;width:400px;text-align:center;top:230.35px;font-size:10px;line-height:10px;color:#27324a;font-weight:normal;">Vega</div>
<div class="t" style="left:291.15px;width:400px;text-align:center;top:230.35px;font-size:10px;line-height:10px;color:#27324a;font-weight:normal;">Orig...</div>
<div class="t" style="left:326.65px;width:400px;text-align:center;top:230.35px;font-size:10px;line-height:10px;color:#27324a;font-weight:normal;">IVChg</div>
<div class="t" style="left:362.50px;width:400px;text-align:center;top:230.35px;font-size:10px;line-height:10px;color:#27324a;font-weight:normal;">Model</div>
<div class="t" style="left:400.35px;width:400px;text-align:center;top:230.35px;font-size:10px;line-height:10px;color:#27324a;font-weight:normal;">Pos</div>
<div class="r" style="left:295.00px;top:329.00px;width:340.00px;height:1.00px;background:#b2bccc;"></div>
<div class="r" style="left:634.00px;top:208.30px;width:1.00px;height:121.20px;background:#b2bccc;"></div>
<div class="r" style="left:295.00px;top:208.30px;width:1.00px;height:121.20px;background:#b2bccc;"></div>
<div class="r" style="left:620.00px;top:244.40px;width:14.50px;height:84.10px;background:#dde1ea;"></div>
<div class="r" style="left:620.00px;top:227.70px;width:14.50px;height:16.70px;background:#fafbfd;"></div>
<div class="r" style="left:620.00px;top:227.70px;width:1.00px;height:16.70px;background:#d0d6e0;"></div>
<div class="r" style="left:-1.00px;top:340.30px;width:294.00px;height:249.20px;background:#a9c1de;"></div>
<div class="r" style="left:-1.00px;top:340.00px;width:294.00px;height:1.00px;background:#b2bccc;"></div>
<div class="r" style="left:-1.00px;top:340.30px;width:294.00px;height:18.10px;background:#f8f9fc;"></div>
<div class="r" style="left:-1.00px;top:357.00px;width:294.00px;height:1.00px;background:#dde2ea;"></div>
<div class="r" style="left:-1px;top:358.4px;width:294px;height:231.10000000000002px;overflow:hidden">
<div class="r" style="left:0;top:15.72px;width:294px;height:1px;background:#c3d1e3"></div>
<div class="t" style="left:-273.40px;width:300px;text-align:right;top:3.86px;font-size:10px;line-height:10px;color:#111">72.25</div>
<div class="t" style="left:-236.70px;width:300px;text-align:right;top:3.86px;font-size:10px;line-height:10px;color:#111">0.14</div>
<div class="t" style="left:-199.70px;width:300px;text-align:right;top:3.86px;font-size:10px;line-height:10px;color:#111">-0.54</div>
<div class="t" style="left:-162.60px;width:300px;text-align:right;top:3.86px;font-size:10px;line-height:10px;color:#111">568.28</div>
<div class="r" style="left:0;top:31.44px;width:294px;height:1px;background:#c3d1e3"></div>
<div class="t" style="left:-273.40px;width:300px;text-align:right;top:19.58px;font-size:10px;line-height:10px;color:#111">68.36</div>
<div class="t" style="left:-236.70px;width:300px;text-align:right;top:19.58px;font-size:10px;line-height:10px;color:#111">0.15</div>
<div class="t" style="left:-199.70px;width:300px;text-align:right;top:19.58px;font-size:10px;line-height:10px;color:#111">-0.66</div>
<div class="t" style="left:-162.60px;width:300px;text-align:right;top:19.58px;font-size:10px;line-height:10px;color:#111">603.53</div>
<div class="r" style="left:0;top:47.16px;width:294px;height:1px;background:#c3d1e3"></div>
<div class="t" style="left:-273.40px;width:300px;text-align:right;top:35.30px;font-size:10px;line-height:10px;color:#111">64.27</div>
<div class="t" style="left:-236.70px;width:300px;text-align:right;top:35.30px;font-size:10px;line-height:10px;color:#111">0.15</div>
<div class="t" style="left:-199.70px;width:300px;text-align:right;top:35.30px;font-size:10px;line-height:10px;color:#111">-0.78</div>
<div class="t" style="left:-162.60px;width:300px;text-align:right;top:35.30px;font-size:10px;line-height:10px;color:#111">632.72</div>
<div class="t" style="left:-51.50px;width:300px;text-align:right;top:35.30px;font-size:10px;line-height:10px;color:#111">+1</div>
<div class="r" style="left:0;top:62.88px;width:294px;height:1px;background:#c3d1e3"></div>
<div class="t" style="left:-273.40px;width:300px;text-align:right;top:51.02px;font-size:10px;line-height:10px;color:#111">60.36</div>
<div class="t" style="left:-236.70px;width:300px;text-align:right;top:51.02px;font-size:10px;line-height:10px;color:#111">0.15</div>
<div class="t" style="left:-199.70px;width:300px;text-align:right;top:51.02px;font-size:10px;line-height:10px;color:#111">-0.87</div>
<div class="t" style="left:-162.60px;width:300px;text-align:right;top:51.02px;font-size:10px;line-height:10px;color:#111">653.53</div>
<div class="t" style="left:-125.60px;width:300px;text-align:right;top:51.02px;font-size:10px;line-height:10px;color:#111">34.15</div>
<div class="t" style="left:-88.60px;width:300px;text-align:right;top:51.02px;font-size:10px;line-height:10px;color:#111">1.86</div>
<div class="t" style="left:-51.50px;width:300px;text-align:right;top:51.02px;font-size:10px;line-height:10px;color:#111">-1</div>
<div class="t" style="left:-8.00px;width:300px;text-align:right;top:51.02px;font-size:10px;line-height:10px;color:#111">+1</div>
<div class="r" style="left:0;top:78.60px;width:294px;height:1px;background:#c3d1e3"></div>
<div class="t" style="left:-273.40px;width:300px;text-align:right;top:66.74px;font-size:10px;line-height:10px;color:#111">56.31</div>
<div class="t" style="left:-236.70px;width:300px;text-align:right;top:66.74px;font-size:10px;line-height:10px;color:#111">0.15</div>
<div class="t" style="left:-199.70px;width:300px;text-align:right;top:66.74px;font-size:10px;line-height:10px;color:#111">-0.97</div>
<div class="t" style="left:-162.60px;width:300px;text-align:right;top:66.74px;font-size:10px;line-height:10px;color:#111">667.99</div>
<div class="r" style="left:0;top:94.32px;width:294px;height:1px;background:#c3d1e3"></div>
<div class="t" style="left:-273.40px;width:300px;text-align:right;top:82.46px;font-size:10px;line-height:10px;color:#111">52.42</div>
<div class="t" style="left:-236.70px;width:300px;text-align:right;top:82.46px;font-size:10px;line-height:10px;color:#111">0.15</div>
<div class="t" style="left:-199.70px;width:300px;text-align:right;top:82.46px;font-size:10px;line-height:10px;color:#111">-1.04</div>
<div class="t" style="left:-162.60px;width:300px;text-align:right;top:82.46px;font-size:10px;line-height:10px;color:#111">675.23</div>
<div class="r" style="left:0;top:110.04px;width:294px;height:1px;background:#c3d1e3"></div>
<div class="t" style="left:-273.40px;width:300px;text-align:right;top:98.18px;font-size:10px;line-height:10px;color:#111">48.60</div>
<div class="t" style="left:-236.70px;width:300px;text-align:right;top:98.18px;font-size:10px;line-height:10px;color:#111">0.15</div>
<div class="t" style="left:-199.70px;width:300px;text-align:right;top:98.18px;font-size:10px;line-height:10px;color:#111">-1.11</div>
<div class="t" style="left:-162.60px;width:300px;text-align:right;top:98.18px;font-size:10px;line-height:10px;color:#111">676.05</div>
<div class="t" style="left:-125.60px;width:300px;text-align:right;top:98.18px;font-size:10px;line-height:10px;color:#111">24.35</div>
<div class="t" style="left:-88.60px;width:300px;text-align:right;top:98.18px;font-size:10px;line-height:10px;color:#111">1.89</div>
<div class="t" style="left:-8.00px;width:300px;text-align:right;top:98.18px;font-size:10px;line-height:10px;color:#111">-2</div>
<div class="r" style="left:0;top:125.76px;width:294px;height:1px;background:#c3d1e3"></div>
<div class="t" style="left:-273.40px;width:300px;text-align:right;top:113.90px;font-size:10px;line-height:10px;color:#111">44.95</div>
<div class="t" style="left:-236.70px;width:300px;text-align:right;top:113.90px;font-size:10px;line-height:10px;color:#111">0.15</div>
<div class="t" style="left:-199.70px;width:300px;text-align:right;top:113.90px;font-size:10px;line-height:10px;color:#111">-1.15</div>
<div class="t" style="left:-162.60px;width:300px;text-align:right;top:113.90px;font-size:10px;line-height:10px;color:#111">671.05</div>
<div class="r" style="left:0;top:141.48px;width:294px;height:1px;background:#c3d1e3"></div>
<div class="t" style="left:-273.40px;width:300px;text-align:right;top:129.62px;font-size:10px;line-height:10px;color:#111">41.47</div>
<div class="t" style="left:-236.70px;width:300px;text-align:right;top:129.62px;font-size:10px;line-height:10px;color:#111">0.14</div>
<div class="t" style="left:-199.70px;width:300px;text-align:right;top:129.62px;font-size:10px;line-height:10px;color:#111">-1.19</div>
<div class="t" style="left:-162.60px;width:300px;text-align:right;top:129.62px;font-size:10px;line-height:10px;color:#111">660.96</div>
<div class="r" style="left:0;top:157.20px;width:294px;height:1px;background:#c3d1e3"></div>
<div class="t" style="left:-273.40px;width:300px;text-align:right;top:145.34px;font-size:10px;line-height:10px;color:#111">38.18</div>
<div class="t" style="left:-236.70px;width:300px;text-align:right;top:145.34px;font-size:10px;line-height:10px;color:#111">0.13</div>
<div class="t" style="left:-199.70px;width:300px;text-align:right;top:145.34px;font-size:10px;line-height:10px;color:#111">-1.21</div>
<div class="t" style="left:-162.60px;width:300px;text-align:right;top:145.34px;font-size:10px;line-height:10px;color:#111">646.55</div>
<div class="t" style="left:-125.60px;width:300px;text-align:right;top:145.34px;font-size:10px;line-height:10px;color:#111">17.75</div>
<div class="t" style="left:-88.60px;width:300px;text-align:right;top:145.34px;font-size:10px;line-height:10px;color:#111">1.84</div>
<div class="t" style="left:-51.50px;width:300px;text-align:right;top:145.34px;font-size:10px;line-height:10px;color:#111">-1</div>
<div class="t" style="left:-8.00px;width:300px;text-align:right;top:145.34px;font-size:10px;line-height:10px;color:#111">+1</div>
<div class="r" style="left:0;top:172.92px;width:294px;height:1px;background:#c3d1e3"></div>
<div class="t" style="left:-273.40px;width:300px;text-align:right;top:161.06px;font-size:10px;line-height:10px;color:#111">35.07</div>
<div class="t" style="left:-236.70px;width:300px;text-align:right;top:161.06px;font-size:10px;line-height:10px;color:#111">0.13</div>
<div class="t" style="left:-199.70px;width:300px;text-align:right;top:161.06px;font-size:10px;line-height:10px;color:#111">-1.22</div>
<div class="t" style="left:-162.60px;width:300px;text-align:right;top:161.06px;font-size:10px;line-height:10px;color:#111">628.56</div>
<div class="t" style="left:-51.50px;width:300px;text-align:right;top:161.06px;font-size:10px;line-height:10px;color:#111">+1</div>
<div class="r" style="left:0;top:172.92px;width:294px;height:15.72px;background:#fffcef"></div>
<div class="r" style="left:213.40px;top:172.92px;width:37.10px;height:15.72px;background:#fdf0b8"></div>
<div class="r" style="left:246.50px;top:175.92px;width:1px;height:10.72px;background:#222"></div>
<div class="r" style="left:0;top:188.64px;width:294px;height:1px;background:#c3d1e3"></div>
<div class="t" style="left:-273.40px;width:300px;text-align:right;top:176.78px;font-size:10px;line-height:10px;color:#111">32.17</div>
<div class="t" style="left:-236.70px;width:300px;text-align:right;top:176.78px;font-size:10px;line-height:10px;color:#111">0.12</div>
<div class="t" style="left:-199.70px;width:300px;text-align:right;top:176.78px;font-size:10px;line-height:10px;color:#111">-1.22</div>
<div class="t" style="left:-162.60px;width:300px;text-align:right;top:176.78px;font-size:10px;line-height:10px;color:#111">607.74</div>
<div class="r" style="left:0;top:204.36px;width:294px;height:1px;background:#c3d1e3"></div>
<div class="t" style="left:-273.40px;width:300px;text-align:right;top:192.50px;font-size:10px;line-height:10px;color:#111">29.47</div>
<div class="t" style="left:-236.70px;width:300px;text-align:right;top:192.50px;font-size:10px;line-height:10px;color:#111">0.11</div>
<div class="t" style="left:-199.70px;width:300px;text-align:right;top:192.50px;font-size:10px;line-height:10px;color:#111">-1.22</div>
<div class="t" style="left:-162.60px;width:300px;text-align:right;top:192.50px;font-size:10px;line-height:10px;color:#111">584.76</div>
<div class="r" style="left:0;top:220.08px;width:294px;height:1px;background:#c3d1e3"></div>
<div class="t" style="left:-273.40px;width:300px;text-align:right;top:208.22px;font-size:10px;line-height:10px;color:#111">26.97</div>
<div class="t" style="left:-236.70px;width:300px;text-align:right;top:208.22px;font-size:10px;line-height:10px;color:#111">0.11</div>
<div class="t" style="left:-199.70px;width:300px;text-align:right;top:208.22px;font-size:10px;line-height:10px;color:#111">-1.20</div>
<div class="t" style="left:-162.60px;width:300px;text-align:right;top:208.22px;font-size:10px;line-height:10px;color:#111">560.34</div>
<div class="r" style="left:0;top:235.80px;width:294px;height:1px;background:#c3d1e3"></div>
<div class="t" style="left:-273.40px;width:300px;text-align:right;top:223.94px;font-size:10px;line-height:10px;color:#111">24.66</div>
<div class="t" style="left:-236.70px;width:300px;text-align:right;top:223.94px;font-size:10px;line-height:10px;color:#111">0.10</div>
<div class="t" style="left:-199.70px;width:300px;text-align:right;top:223.94px;font-size:10px;line-height:10px;color:#111">-1.18</div>
<div class="t" style="left:-162.60px;width:300px;text-align:right;top:223.94px;font-size:10px;line-height:10px;color:#111">534.87</div>
</div>
<div class="r" style="left:27.00px;top:341.30px;width:1.00px;height:17.10px;background:#dde2ea;"></div>
<div class="r" style="left:64.00px;top:341.30px;width:1.00px;height:17.10px;background:#dde2ea;"></div>
<div class="r" style="left:101.00px;top:341.30px;width:1.00px;height:17.10px;background:#dde2ea;"></div>
<div class="r" style="left:138.00px;top:341.30px;width:1.00px;height:17.10px;background:#dde2ea;"></div>
<div class="r" style="left:175.00px;top:341.30px;width:1.00px;height:17.10px;background:#dde2ea;"></div>
<div class="r" style="left:212.00px;top:341.30px;width:1.00px;height:17.10px;background:#dde2ea;"></div>
<div class="r" style="left:249.00px;top:341.30px;width:1.00px;height:17.10px;background:#dde2ea;"></div>
<div class="r" style="left:27.00px;top:358.40px;width:1.00px;height:231.10px;background:#c3d1e3;"></div>
<div class="r" style="left:64.00px;top:358.40px;width:1.00px;height:231.10px;background:#c3d1e3;"></div>
<div class="r" style="left:101.00px;top:358.40px;width:1.00px;height:231.10px;background:#c3d1e3;"></div>
<div class="r" style="left:138.00px;top:358.40px;width:1.00px;height:231.10px;background:#c3d1e3;"></div>
<div class="r" style="left:175.00px;top:358.40px;width:1.00px;height:231.10px;background:#c3d1e3;"></div>
<div class="r" style="left:212.00px;top:358.40px;width:1.00px;height:231.10px;background:#c3d1e3;"></div>
<div class="r" style="left:249.00px;top:358.40px;width:1.00px;height:231.10px;background:#c3d1e3;"></div>
<div class="t" style="left:-192.70px;width:400px;text-align:center;top:344.15px;font-size:10px;line-height:10px;color:#27324a;font-weight:normal;">Delta</div>
<div class="t" style="left:-154.05px;width:400px;text-align:center;top:344.15px;font-size:10px;line-height:10px;color:#27324a;font-weight:normal;">Gam...</div>
<div class="t" style="left:-117.20px;width:400px;text-align:center;top:344.15px;font-size:10px;line-height:10px;color:#27324a;font-weight:normal;">Theta</div>
<div class="t" style="left:-80.15px;width:400px;text-align:center;top:344.15px;font-size:10px;line-height:10px;color:#27324a;font-weight:normal;">Vega</div>
<div class="t" style="left:-43.10px;width:400px;text-align:center;top:344.15px;font-size:10px;line-height:10px;color:#27324a;font-weight:normal;">Orig...</div>
<div class="t" style="left:-6.10px;width:400px;text-align:center;top:344.15px;font-size:10px;line-height:10px;color:#27324a;font-weight:normal;">IVChg</div>
<div class="t" style="left:30.95px;width:400px;text-align:center;top:344.15px;font-size:10px;line-height:10px;color:#27324a;font-weight:normal;">Model</div>
<div class="t" style="left:71.25px;width:400px;text-align:center;top:344.15px;font-size:10px;line-height:10px;color:#27324a;font-weight:normal;">Pos</div>
<div class="r" style="left:-1.00px;top:589.00px;width:294.00px;height:1.00px;background:#b2bccc;"></div>
<div class="r" style="left:292.00px;top:340.30px;width:1.00px;height:249.20px;background:#b2bccc;"></div>
<div class="r" style="left:295.00px;top:340.30px;width:340.00px;height:249.20px;background:#a9c1de;"></div>
<div class="r" style="left:295.00px;top:340.00px;width:340.00px;height:1.00px;background:#b2bccc;"></div>
<div class="r" style="left:295.00px;top:340.30px;width:340.00px;height:18.10px;background:#f8f9fc;"></div>
<div class="r" style="left:295.00px;top:357.00px;width:340.00px;height:1.00px;background:#dde2ea;"></div>
<div class="r" style="left:295px;top:358.4px;width:340px;height:231.10000000000002px;overflow:hidden">
<div class="r" style="left:0;top:15.72px;width:325px;height:1px;background:#c3d1e3"></div>
<div class="t" style="left:-265.30px;width:300px;text-align:right;top:3.86px;font-size:10px;line-height:10px;color:#2e9a3a">189....</div>
<div class="t" style="left:-229.70px;width:300px;text-align:right;top:3.86px;font-size:10px;line-height:10px;color:#111">-69.86</div>
<div class="t" style="left:-194.30px;width:300px;text-align:right;top:3.86px;font-size:10px;line-height:10px;color:#111">0.14</div>
<div class="t" style="left:-158.70px;width:300px;text-align:right;top:3.86px;font-size:10px;line-height:10px;color:#111">-0.50</div>
<div class="t" style="left:-123.70px;width:300px;text-align:right;top:3.86px;font-size:10px;line-height:10px;color:#111">645....</div>
<div class="r" style="left:0;top:31.44px;width:325px;height:1px;background:#c3d1e3"></div>
<div class="t" style="left:-265.30px;width:300px;text-align:right;top:19.58px;font-size:10px;line-height:10px;color:#2e9a3a">173....</div>
<div class="t" style="left:-229.70px;width:300px;text-align:right;top:19.58px;font-size:10px;line-height:10px;color:#111">-66.19</div>
<div class="t" style="left:-194.30px;width:300px;text-align:right;top:19.58px;font-size:10px;line-height:10px;color:#111">0.14</div>
<div class="t" style="left:-158.70px;width:300px;text-align:right;top:19.58px;font-size:10px;line-height:10px;color:#111">-0.59</div>
<div class="t" style="left:-123.70px;width:300px;text-align:right;top:19.58px;font-size:10px;line-height:10px;color:#111">677....</div>
<div class="r" style="left:0;top:47.16px;width:325px;height:1px;background:#c3d1e3"></div>
<div class="t" style="left:-265.30px;width:300px;text-align:right;top:35.30px;font-size:10px;line-height:10px;color:#2e9a3a">158....</div>
<div class="t" style="left:-229.70px;width:300px;text-align:right;top:35.30px;font-size:10px;line-height:10px;color:#111">-62.42</div>
<div class="t" style="left:-194.30px;width:300px;text-align:right;top:35.30px;font-size:10px;line-height:10px;color:#111">0.14</div>
<div class="t" style="left:-158.70px;width:300px;text-align:right;top:35.30px;font-size:10px;line-height:10px;color:#111">-0.69</div>
<div class="t" style="left:-123.70px;width:300px;text-align:right;top:35.30px;font-size:10px;line-height:10px;color:#111">703....</div>
<div class="r" style="left:0;top:62.88px;width:325px;height:1px;background:#c3d1e3"></div>
<div class="t" style="left:-265.30px;width:300px;text-align:right;top:51.02px;font-size:10px;line-height:10px;color:#e52a2a">145....</div>
<div class="t" style="left:-229.70px;width:300px;text-align:right;top:51.02px;font-size:10px;line-height:10px;color:#111">-58.66</div>
<div class="t" style="left:-194.30px;width:300px;text-align:right;top:51.02px;font-size:10px;line-height:10px;color:#111">0.14</div>
<div class="t" style="left:-158.70px;width:300px;text-align:right;top:51.02px;font-size:10px;line-height:10px;color:#111">-0.78</div>
<div class="t" style="left:-123.70px;width:300px;text-align:right;top:51.02px;font-size:10px;line-height:10px;color:#111">721....</div>
<div class="r" style="left:0;top:78.60px;width:325px;height:1px;background:#c3d1e3"></div>
<div class="t" style="left:-265.30px;width:300px;text-align:right;top:66.74px;font-size:10px;line-height:10px;color:#e52a2a">132....</div>
<div class="t" style="left:-229.70px;width:300px;text-align:right;top:66.74px;font-size:10px;line-height:10px;color:#111">-54.99</div>
<div class="t" style="left:-194.30px;width:300px;text-align:right;top:66.74px;font-size:10px;line-height:10px;color:#111">0.14</div>
<div class="t" style="left:-158.70px;width:300px;text-align:right;top:66.74px;font-size:10px;line-height:10px;color:#111">-0.84</div>
<div class="t" style="left:-123.70px;width:300px;text-align:right;top:66.74px;font-size:10px;line-height:10px;color:#111">733....</div>
<div class="r" style="left:0;top:94.32px;width:325px;height:1px;background:#c3d1e3"></div>
<div class="t" style="left:-265.30px;width:300px;text-align:right;top:82.46px;font-size:10px;line-height:10px;color:#e52a2a">121....</div>
<div class="t" style="left:-229.70px;width:300px;text-align:right;top:82.46px;font-size:10px;line-height:10px;color:#111">-51.34</div>
<div class="t" style="left:-194.30px;width:300px;text-align:right;top:82.46px;font-size:10px;line-height:10px;color:#111">0.14</div>
<div class="t" style="left:-158.70px;width:300px;text-align:right;top:82.46px;font-size:10px;line-height:10px;color:#111">-0.91</div>
<div class="t" style="left:-123.70px;width:300px;text-align:right;top:82.46px;font-size:10px;line-height:10px;color:#111">738....</div>
<div class="r" style="left:0;top:110.04px;width:325px;height:1px;background:#c3d1e3"></div>
<div class="t" style="left:-265.30px;width:300px;text-align:right;top:98.18px;font-size:10px;line-height:10px;color:#2e9a3a">110....</div>
<div class="t" style="left:-229.70px;width:300px;text-align:right;top:98.18px;font-size:10px;line-height:10px;color:#111">-47.84</div>
<div class="t" style="left:-194.30px;width:300px;text-align:right;top:98.18px;font-size:10px;line-height:10px;color:#111">0.14</div>
<div class="t" style="left:-158.70px;width:300px;text-align:right;top:98.18px;font-size:10px;line-height:10px;color:#111">-0.97</div>
<div class="t" style="left:-123.70px;width:300px;text-align:right;top:98.18px;font-size:10px;line-height:10px;color:#111">738....</div>
<div class="r" style="left:0;top:125.76px;width:325px;height:1px;background:#c3d1e3"></div>
<div class="t" style="left:-265.30px;width:300px;text-align:right;top:113.90px;font-size:10px;line-height:10px;color:#2e9a3a">101....</div>
<div class="t" style="left:-229.70px;width:300px;text-align:right;top:113.90px;font-size:10px;line-height:10px;color:#111">-44.46</div>
<div class="t" style="left:-194.30px;width:300px;text-align:right;top:113.90px;font-size:10px;line-height:10px;color:#111">0.13</div>
<div class="t" style="left:-158.70px;width:300px;text-align:right;top:113.90px;font-size:10px;line-height:10px;color:#111">-1.01</div>
<div class="t" style="left:-123.70px;width:300px;text-align:right;top:113.90px;font-size:10px;line-height:10px;color:#111">732....</div>
<div class="r" style="left:0;top:141.48px;width:325px;height:1px;background:#c3d1e3"></div>
<div class="t" style="left:-265.30px;width:300px;text-align:right;top:129.62px;font-size:10px;line-height:10px;color:#2e9a3a">92.20</div>
<div class="t" style="left:-229.70px;width:300px;text-align:right;top:129.62px;font-size:10px;line-height:10px;color:#111">-41.24</div>
<div class="t" style="left:-194.30px;width:300px;text-align:right;top:129.62px;font-size:10px;line-height:10px;color:#111">0.13</div>
<div class="t" style="left:-158.70px;width:300px;text-align:right;top:129.62px;font-size:10px;line-height:10px;color:#111">-1.04</div>
<div class="t" style="left:-123.70px;width:300px;text-align:right;top:129.62px;font-size:10px;line-height:10px;color:#111">721....</div>
<div class="r" style="left:0;top:157.20px;width:325px;height:1px;background:#c3d1e3"></div>
<div class="t" style="left:-265.30px;width:300px;text-align:right;top:145.34px;font-size:10px;line-height:10px;color:#2e9a3a">83.95</div>
<div class="t" style="left:-229.70px;width:300px;text-align:right;top:145.34px;font-size:10px;line-height:10px;color:#111">-38.18</div>
<div class="t" style="left:-194.30px;width:300px;text-align:right;top:145.34px;font-size:10px;line-height:10px;color:#111">0.13</div>
<div class="t" style="left:-158.70px;width:300px;text-align:right;top:145.34px;font-size:10px;line-height:10px;color:#111">-1.06</div>
<div class="t" style="left:-123.70px;width:300px;text-align:right;top:145.34px;font-size:10px;line-height:10px;color:#111">706....</div>
<div class="r" style="left:0;top:172.92px;width:325px;height:1px;background:#c3d1e3"></div>
<div class="t" style="left:-265.30px;width:300px;text-align:right;top:161.06px;font-size:10px;line-height:10px;color:#2e9a3a">76.60</div>
<div class="t" style="left:-229.70px;width:300px;text-align:right;top:161.06px;font-size:10px;line-height:10px;color:#111">-35.30</div>
<div class="t" style="left:-194.30px;width:300px;text-align:right;top:161.06px;font-size:10px;line-height:10px;color:#111">0.12</div>
<div class="t" style="left:-158.70px;width:300px;text-align:right;top:161.06px;font-size:10px;line-height:10px;color:#111">-1.07</div>
<div class="t" style="left:-123.70px;width:300px;text-align:right;top:161.06px;font-size:10px;line-height:10px;color:#111">688....</div>
<div class="r" style="left:0;top:172.92px;width:325px;height:15.72px;background:#fffcef"></div>
<div class="r" style="left:0;top:188.64px;width:325px;height:1px;background:#c3d1e3"></div>
<div class="t" style="left:-265.30px;width:300px;text-align:right;top:176.78px;font-size:10px;line-height:10px;color:#5aa040">69.80</div>
<div class="t" style="left:-229.70px;width:300px;text-align:right;top:176.78px;font-size:10px;line-height:10px;color:#111">-32.58</div>
<div class="t" style="left:-194.30px;width:300px;text-align:right;top:176.78px;font-size:10px;line-height:10px;color:#111">0.11</div>
<div class="t" style="left:-158.70px;width:300px;text-align:right;top:176.78px;font-size:10px;line-height:10px;color:#111">-1.08</div>
<div class="t" style="left:-123.70px;width:300px;text-align:right;top:176.78px;font-size:10px;line-height:10px;color:#111">667....</div>
<div class="r" style="left:0;top:204.36px;width:325px;height:1px;background:#c3d1e3"></div>
<div class="t" style="left:-265.30px;width:300px;text-align:right;top:192.50px;font-size:10px;line-height:10px;color:#2e9a3a">63.60</div>
<div class="t" style="left:-229.70px;width:300px;text-align:right;top:192.50px;font-size:10px;line-height:10px;color:#111">-30.04</div>
<div class="t" style="left:-194.30px;width:300px;text-align:right;top:192.50px;font-size:10px;line-height:10px;color:#111">0.11</div>
<div class="t" style="left:-158.70px;width:300px;text-align:right;top:192.50px;font-size:10px;line-height:10px;color:#111">-1.08</div>
<div class="t" style="left:-123.70px;width:300px;text-align:right;top:192.50px;font-size:10px;line-height:10px;color:#111">644....</div>
<div class="r" style="left:0;top:220.08px;width:325px;height:1px;background:#c3d1e3"></div>
<div class="t" style="left:-265.30px;width:300px;text-align:right;top:208.22px;font-size:10px;line-height:10px;color:#2e9a3a">57.95</div>
<div class="t" style="left:-229.70px;width:300px;text-align:right;top:208.22px;font-size:10px;line-height:10px;color:#111">-27.66</div>
<div class="t" style="left:-194.30px;width:300px;text-align:right;top:208.22px;font-size:10px;line-height:10px;color:#111">0.10</div>
<div class="t" style="left:-158.70px;width:300px;text-align:right;top:208.22px;font-size:10px;line-height:10px;color:#111">-1.07</div>
<div class="t" style="left:-123.70px;width:300px;text-align:right;top:208.22px;font-size:10px;line-height:10px;color:#111">620....</div>
<div class="r" style="left:0;top:235.80px;width:325px;height:1px;background:#c3d1e3"></div>
<div class="t" style="left:-265.30px;width:300px;text-align:right;top:223.94px;font-size:10px;line-height:10px;color:#2e9a3a">52.85</div>
<div class="t" style="left:-229.70px;width:300px;text-align:right;top:223.94px;font-size:10px;line-height:10px;color:#111">-25.46</div>
<div class="t" style="left:-194.30px;width:300px;text-align:right;top:223.94px;font-size:10px;line-height:10px;color:#111">0.10</div>
<div class="t" style="left:-158.70px;width:300px;text-align:right;top:223.94px;font-size:10px;line-height:10px;color:#111">-1.06</div>
<div class="t" style="left:-123.70px;width:300px;text-align:right;top:223.94px;font-size:10px;line-height:10px;color:#111">594....</div>
</div>
<div class="r" style="left:331.00px;top:341.30px;width:1.00px;height:17.10px;background:#dde2ea;"></div>
<div class="r" style="left:367.00px;top:341.30px;width:1.00px;height:17.10px;background:#dde2ea;"></div>
<div class="r" style="left:402.00px;top:341.30px;width:1.00px;height:17.10px;background:#dde2ea;"></div>
<div class="r" style="left:438.00px;top:341.30px;width:1.00px;height:17.10px;background:#dde2ea;"></div>
<div class="r" style="left:473.00px;top:341.30px;width:1.00px;height:17.10px;background:#dde2ea;"></div>
<div class="r" style="left:509.00px;top:341.30px;width:1.00px;height:17.10px;background:#dde2ea;"></div>
<div class="r" style="left:544.00px;top:341.30px;width:1.00px;height:17.10px;background:#dde2ea;"></div>
<div class="r" style="left:580.00px;top:341.30px;width:1.00px;height:17.10px;background:#dde2ea;"></div>
<div class="r" style="left:331.00px;top:358.40px;width:1.00px;height:231.10px;background:#c3d1e3;"></div>
<div class="r" style="left:367.00px;top:358.40px;width:1.00px;height:231.10px;background:#c3d1e3;"></div>
<div class="r" style="left:402.00px;top:358.40px;width:1.00px;height:231.10px;background:#c3d1e3;"></div>
<div class="r" style="left:438.00px;top:358.40px;width:1.00px;height:231.10px;background:#c3d1e3;"></div>
<div class="r" style="left:473.00px;top:358.40px;width:1.00px;height:231.10px;background:#c3d1e3;"></div>
<div class="r" style="left:509.00px;top:358.40px;width:1.00px;height:231.10px;background:#c3d1e3;"></div>
<div class="r" style="left:544.00px;top:358.40px;width:1.00px;height:231.10px;background:#c3d1e3;"></div>
<div class="r" style="left:580.00px;top:358.40px;width:1.00px;height:231.10px;background:#c3d1e3;"></div>
<div class="t" style="left:113.35px;width:400px;text-align:center;top:344.15px;font-size:10px;line-height:10px;color:#27324a;font-weight:normal;">Mid</div>
<div class="t" style="left:149.50px;width:400px;text-align:center;top:344.15px;font-size:10px;line-height:10px;color:#27324a;font-weight:normal;">Delta</div>
<div class="t" style="left:185.00px;width:400px;text-align:center;top:344.15px;font-size:10px;line-height:10px;color:#27324a;font-weight:normal;">Ga...</div>
<div class="t" style="left:220.50px;width:400px;text-align:center;top:344.15px;font-size:10px;line-height:10px;color:#27324a;font-weight:normal;">Theta</div>
<div class="t" style="left:255.80px;width:400px;text-align:center;top:344.15px;font-size:10px;line-height:10px;color:#27324a;font-weight:normal;">Vega</div>
<div class="t" style="left:291.15px;width:400px;text-align:center;top:344.15px;font-size:10px;line-height:10px;color:#27324a;font-weight:normal;">Orig...</div>
<div class="t" style="left:326.65px;width:400px;text-align:center;top:344.15px;font-size:10px;line-height:10px;color:#27324a;font-weight:normal;">IVChg</div>
<div class="t" style="left:362.50px;width:400px;text-align:center;top:344.15px;font-size:10px;line-height:10px;color:#27324a;font-weight:normal;">Model</div>
<div class="t" style="left:400.35px;width:400px;text-align:center;top:344.15px;font-size:10px;line-height:10px;color:#27324a;font-weight:normal;">Pos</div>
<div class="r" style="left:295.00px;top:589.00px;width:340.00px;height:1.00px;background:#b2bccc;"></div>
<div class="r" style="left:634.00px;top:340.30px;width:1.00px;height:249.20px;background:#b2bccc;"></div>
<div class="r" style="left:295.00px;top:340.30px;width:1.00px;height:249.20px;background:#b2bccc;"></div>
<div class="r" style="left:620.00px;top:358.40px;width:14.50px;height:230.10px;background:#dde1ea;"></div>
<div class="r" style="left:620.00px;top:341.30px;width:14.50px;height:17.10px;background:#fafbfd;"></div>
<div class="r" style="left:620.00px;top:341.30px;width:1.00px;height:17.10px;background:#d0d6e0;"></div>
<svg style="left:623px;top:249px" width="8" height="5"><path d="M0 4L3.5 0.5L7 4z" fill="#6a7488"/></svg>
<div class="r" style="left:622.00px;top:270.50px;width:9.00px;height:14.50px;background:#a2aaba;"></div>
<svg style="left:623px;top:320px" width="8" height="5"><path d="M0 0.5L3.5 4L7 0.5z" fill="#6a7488"/></svg>
<svg style="left:623px;top:362px" width="8" height="5"><path d="M0 4L3.5 0.5L7 4z" fill="#6a7488"/></svg>
<div class="r" style="left:622.00px;top:441.00px;width:9.00px;height:14.30px;background:#a2aaba;"></div>
<svg style="left:623px;top:581px" width="8" height="5"><path d="M0 0.5L3.5 4L7 0.5z" fill="#6a7488"/></svg>
<svg style="left:639px;top:398px" width="4" height="18"><g fill="#aab2c4"><rect x="0" y="0.0" width="1.5" height="1.5"/><rect x="1.8" y="1.7" width="1.5" height="1.5"/><rect x="0" y="3.5" width="1.5" height="1.5"/><rect x="1.8" y="5.2" width="1.5" height="1.5"/><rect x="0" y="7.0" width="1.5" height="1.5"/><rect x="1.8" y="8.7" width="1.5" height="1.5"/><rect x="0" y="10.5" width="1.5" height="1.5"/><rect x="1.8" y="12.2" width="1.5" height="1.5"/><rect x="0" y="14.0" width="1.5" height="1.5"/><rect x="1.8" y="15.7" width="1.5" height="1.5"/></g></svg>
<div class="r" style="left:0.00px;top:600.50px;width:645.00px;height:21.00px;background:#d1d7e3;"></div>
<div class="box" style="left:-5px;top:602.5px;width:106px;height:16px;background:#fff;border:1px solid #b8c0d0"></div>
<div class="t" style="left:-4.10px;top:606.50px;font-size:10px;line-height:10px;color:#111;font-weight:normal;">bined</div>
<svg style="left:91px;top:608.5px" width="6" height="4"><path d="M0 0h5L2.5 3z" fill="#5a6478"/></svg>
<div class="box" style="left:107.5px;top:602.5px;width:69px;height:16px;background:#fff;border:1px solid #b8c0d0"></div>
<div class="t" style="left:111.50px;top:606.20px;font-size:10px;line-height:10px;color:#111;font-weight:normal;">Auto</div>
<svg style="left:167px;top:608.5px" width="6" height="4"><path d="M0 0h5L2.5 3z" fill="#5a6478"/></svg>
<div class="box" style="left:517px;top:605px;width:10px;height:10px;background:#fff;border:1px solid #9aa2b2"></div>
<div class="t" style="left:529.50px;top:606.20px;font-size:10px;line-height:10px;color:#1f2a40;font-weight:normal;letter-spacing:0.243px;">Ignore Today&#39;s Trades</div>
<div class="r" style="left:-5.00px;top:621.50px;width:640.50px;height:50.00px;background:#fff;"></div>
<div class="r" style="left:-5.00px;top:621.50px;width:640.50px;height:18.00px;background:#f8f9fc;"></div>
<div class="r" style="left:-5.00px;top:621.50px;width:640.50px;height:1.00px;background:#b2bccc;"></div>
<div class="r" style="left:-5.00px;top:639.00px;width:640.50px;height:1.00px;background:#e2e6ee;"></div>
<div class="r" style="left:-5.00px;top:655.00px;width:640.50px;height:1.00px;background:#e2e6ee;"></div>
<div class="r" style="left:634.50px;top:621.50px;width:1.00px;height:50.00px;background:#b2bccc;"></div>
<div class="r" style="left:9.00px;top:622.50px;width:1.00px;height:49.00px;background:#dde2ea;"></div>
<div class="r" style="left:66.00px;top:622.50px;width:1.00px;height:49.00px;background:#dde2ea;"></div>
<div class="r" style="left:123.00px;top:622.50px;width:1.00px;height:49.00px;background:#dde2ea;"></div>
<div class="r" style="left:180.00px;top:622.50px;width:1.00px;height:49.00px;background:#dde2ea;"></div>
<div class="r" style="left:237.00px;top:622.50px;width:1.00px;height:49.00px;background:#dde2ea;"></div>
<div class="r" style="left:293.00px;top:622.50px;width:1.00px;height:49.00px;background:#dde2ea;"></div>
<div class="r" style="left:350.00px;top:622.50px;width:1.00px;height:49.00px;background:#dde2ea;"></div>
<div class="r" style="left:407.00px;top:622.50px;width:1.00px;height:49.00px;background:#dde2ea;"></div>
<div class="r" style="left:464.00px;top:622.50px;width:1.00px;height:49.00px;background:#dde2ea;"></div>
<div class="r" style="left:521.00px;top:622.50px;width:1.00px;height:49.00px;background:#dde2ea;"></div>
<div class="r" style="left:577.00px;top:622.50px;width:1.00px;height:49.00px;background:#dde2ea;"></div>
<div class="t" style="left:-162.05px;width:400px;text-align:center;top:626.20px;font-size:10px;line-height:10px;color:#27324a;font-weight:normal;">Cost</div>
<div class="t" style="left:-105.20px;width:400px;text-align:center;top:626.20px;font-size:10px;line-height:10px;color:#27324a;font-weight:normal;">Curr Cost</div>
<div class="t" style="left:-48.20px;width:400px;text-align:center;top:626.20px;font-size:10px;line-height:10px;color:#27324a;font-weight:normal;">Commissi...</div>
<div class="t" style="left:8.70px;width:400px;text-align:center;top:626.20px;font-size:10px;line-height:10px;color:#27324a;font-weight:normal;">PnL</div>
<div class="t" style="left:65.30px;width:400px;text-align:center;top:626.20px;font-size:10px;line-height:10px;color:#27324a;font-weight:normal;">PnL%</div>
<div class="t" style="left:122.10px;width:400px;text-align:center;top:626.20px;font-size:10px;line-height:10px;color:#27324a;font-weight:normal;">Delta</div>
<div class="t" style="left:179.20px;width:400px;text-align:center;top:626.20px;font-size:10px;line-height:10px;color:#27324a;font-weight:normal;">Gamma</div>
<div class="t" style="left:236.05px;width:400px;text-align:center;top:626.20px;font-size:10px;line-height:10px;color:#27324a;font-weight:normal;">Theta</div>
<div class="t" style="left:292.65px;width:400px;text-align:center;top:626.20px;font-size:10px;line-height:10px;color:#27324a;font-weight:normal;">Vega</div>
<div class="t" style="left:349.40px;width:400px;text-align:center;top:626.20px;font-size:10px;line-height:10px;color:#27324a;font-weight:normal;">T/D</div>
<div class="t" style="left:406.15px;width:400px;text-align:center;top:626.20px;font-size:10px;line-height:10px;color:#27324a;font-weight:normal;">Plot</div>
<div class="t" style="left:-393.50px;width:400px;text-align:right;top:643.30px;font-size:10px;line-height:10px;color:#111;font-weight:normal;">4.80</div>
<div class="t" style="left:-336.60px;width:400px;text-align:right;top:643.30px;font-size:10px;line-height:10px;color:#111;font-weight:normal;">-324.80</div>
<div class="t" style="left:-279.80px;width:400px;text-align:right;top:643.30px;font-size:10px;line-height:10px;color:#111;font-weight:normal;">795.00</div>
<div class="t" style="left:-222.60px;width:400px;text-align:right;top:643.30px;font-size:10px;line-height:10px;color:#111;font-weight:normal;">4.80</div>
<div class="t" style="left:-166.00px;width:400px;text-align:right;top:643.30px;font-size:10px;line-height:10px;color:#2e9a3a;font-weight:normal;">470.20</div>
<div class="t" style="left:-109.40px;width:400px;text-align:right;top:643.30px;font-size:10px;line-height:10px;color:#2e9a3a;font-weight:normal;">144.77%</div>
<div class="t" style="left:-52.40px;width:400px;text-align:right;top:643.30px;font-size:10px;line-height:10px;color:#111;font-weight:normal;">-1.34</div>
<div class="t" style="left:4.80px;width:400px;text-align:right;top:643.30px;font-size:10px;line-height:10px;color:#111;font-weight:normal;">-0.01</div>
<div class="t" style="left:61.30px;width:400px;text-align:right;top:643.30px;font-size:10px;line-height:10px;color:#111;font-weight:normal;">12.88</div>
<div class="t" style="left:118.00px;width:400px;text-align:right;top:643.30px;font-size:10px;line-height:10px;color:#111;font-weight:normal;">-52.00</div>
<div class="t" style="left:174.80px;width:400px;text-align:right;top:643.30px;font-size:10px;line-height:10px;color:#111;font-weight:normal;">9.6</div>
<svg style="left:601.1px;top:642.1px" width="11" height="11"><rect x="0.5" y="0.5" width="9.5" height="9.5" fill="#fff" stroke="#a4acbc"/><path d="M2.3 5.2l2 2.2 3.8-4.6" fill="none" stroke="#50586a" stroke-width="1.1"/></svg>
<div class="t" style="left:-393.50px;width:400px;text-align:right;top:659.00px;font-size:10px;line-height:10px;color:#111;font-weight:normal;">9.60</div>
<div class="t" style="left:-336.60px;width:400px;text-align:right;top:659.00px;font-size:10px;line-height:10px;color:#111;font-weight:normal;">-1,019.60</div>
<div class="t" style="left:-279.80px;width:400px;text-align:right;top:659.00px;font-size:10px;line-height:10px;color:#111;font-weight:normal;">1,485.00</div>
<div class="t" style="left:-222.60px;width:400px;text-align:right;top:659.00px;font-size:10px;line-height:10px;color:#111;font-weight:normal;">9.60</div>
<div class="t" style="left:-166.00px;width:400px;text-align:right;top:659.00px;font-size:10px;line-height:10px;color:#2e9a3a;font-weight:normal;">465.40</div>
<div class="t" style="left:-109.40px;width:400px;text-align:right;top:659.00px;font-size:10px;line-height:10px;color:#2e9a3a;font-weight:normal;">48.00%</div>
<div class="t" style="left:-52.40px;width:400px;text-align:right;top:659.00px;font-size:10px;line-height:10px;color:#111;font-weight:normal;">-2.23</div>
<div class="t" style="left:4.80px;width:400px;text-align:right;top:659.00px;font-size:10px;line-height:10px;color:#111;font-weight:normal;">-0.02</div>
<div class="t" style="left:61.30px;width:400px;text-align:right;top:659.00px;font-size:10px;line-height:10px;color:#111;font-weight:normal;">21.38</div>
<div class="t" style="left:118.00px;width:400px;text-align:right;top:659.00px;font-size:10px;line-height:10px;color:#111;font-weight:normal;">-91.22</div>
<div class="t" style="left:174.80px;width:400px;text-align:right;top:659.00px;font-size:10px;line-height:10px;color:#111;font-weight:normal;">9.6</div>
<svg style="left:601.1px;top:657.8px" width="11" height="11"><rect x="0.5" y="0.5" width="9.5" height="9.5" fill="#fff" stroke="#a4acbc"/><path d="M2.3 5.2l2 2.2 3.8-4.6" fill="none" stroke="#50586a" stroke-width="1.1"/></svg>
<div class="r" style="left:0.00px;top:672.50px;width:1080.00px;height:2.50px;background:#2a3450;"></div>
<div class="r" style="left:-5.00px;top:671.00px;width:640.50px;height:1.00px;background:#b2bccc;"></div>
<div class="r" style="left:645.00px;top:137.00px;width:1.00px;height:534.00px;background:#b4bccc;"></div>
<div class="r" style="left:646.00px;top:139.00px;width:434.00px;height:22.00px;background:#d5dbe7;"></div>
<div class="r" style="left:646.00px;top:138.60px;width:434.00px;height:1.00px;background:#b4bccc;"></div>
<div class="r" style="left:710.00px;top:160.00px;width:370.00px;height:1.00px;background:#aeb6c6;"></div>
<div class="r" style="left:710.00px;top:139.00px;width:1.00px;height:22.00px;background:#a8b0c0;"></div>
<div class="t" style="left:478.70px;width:400px;text-align:center;top:144.70px;font-size:10px;line-height:10px;color:#1f2a40;font-weight:normal;letter-spacing:-0.267px;">Risk Chart</div>
<div class="r" style="left:776.00px;top:139.00px;width:1.00px;height:21.00px;background:#a8b0c0;"></div>
<div class="t" style="left:543.85px;width:400px;text-align:center;top:144.70px;font-size:10px;line-height:10px;color:#1f2a40;font-weight:normal;letter-spacing:-0.247px;">Price Chart</div>
<div class="r" style="left:882.00px;top:139.00px;width:1.00px;height:21.00px;background:#a8b0c0;"></div>
<div class="t" style="left:629.85px;width:400px;text-align:center;top:144.70px;font-size:10px;line-height:10px;color:#1f2a40;font-weight:normal;letter-spacing:-0.038px;">Movement Analysis</div>
<div class="r" style="left:936.00px;top:139.00px;width:1.00px;height:21.00px;background:#a8b0c0;"></div>
<div class="t" style="left:709.90px;width:400px;text-align:center;top:144.70px;font-size:10px;line-height:10px;color:#1f2a40;font-weight:normal;letter-spacing:-0.148px;">Volatility</div>
<div class="r" style="left:1069.00px;top:139.00px;width:1.00px;height:21.00px;background:#a8b0c0;"></div>
<div class="t" style="left:803.40px;width:400px;text-align:center;top:144.70px;font-size:10px;line-height:10px;color:#1f2a40;font-weight:normal;letter-spacing:-0.064px;">Statistics &amp; Fundamentals</div>
<div class="r" style="left:645.00px;top:139.00px;width:1.00px;height:22.00px;background:#aeb6c6;"></div>
<div class="t" style="left:651.50px;top:167.00px;font-size:10px;line-height:10px;color:#1f2a40;font-weight:normal;letter-spacing:-0.052px;">Vol Adjust</div>
<div class="box" style="left:699.5px;top:162.8px;width:45px;height:16px;background:#fff;border:1px solid #b8c0d0"></div>
<div class="t" style="left:328.30px;width:400px;text-align:right;top:167.00px;font-size:10px;line-height:10px;color:#111;font-weight:normal;">0</div>
<svg style="left:734px;top:164px" width="8" height="14"><path d="M1.2 4.6L3.5 2.2L5.8 4.6z" fill="#4a5468"/><path d="M1.2 9L3.5 11.4L5.8 9z" fill="#4a5468"/></svg>
<div class="t" style="left:983.60px;top:167.00px;font-size:10px;line-height:10px;color:#1f2a40;font-weight:normal;letter-spacing:-0.207px;">Projection</div>
<div class="box" style="left:1030.5px;top:162.5px;width:60px;height:17px;background:#fff;border:1px solid #b8c0d0"></div>
<div class="t" style="left:1033.00px;top:167.00px;font-size:10px;line-height:10px;color:#111;font-weight:normal;letter-spacing:0.246px;">25/07/2024</div>
<div class="r" style="left:646.50px;top:181.70px;width:433.50px;height:468.60px;background:#ffffff;"></div>
<svg style="left:0;top:0" width="1080" height="675" viewBox="0 0 1080 675">
<rect x="898" y="197.40000000000003" width="182" height="273.84" fill="#8fcbda"/>
<rect x="952.8" y="197.40000000000003" width="108.7" height="273.84" fill="#4e80bf"/>
<line x1="693.5" y1="471.24" x2="898" y2="471.24" stroke="#dcdcdc" stroke-width="1"/>
<line x1="898" y1="471.24" x2="1080" y2="471.24" stroke="#ffffff" stroke-opacity="0.5" stroke-width="1"/>
<line x1="693.5" y1="448.42" x2="898" y2="448.42" stroke="#dcdcdc" stroke-width="1"/>
<line x1="898" y1="448.42" x2="1080" y2="448.42" stroke="#ffffff" stroke-opacity="0.5" stroke-width="1"/>
<line x1="693.5" y1="402.78" x2="898" y2="402.78" stroke="#dcdcdc" stroke-width="1"/>
<line x1="898" y1="402.78" x2="1080" y2="402.78" stroke="#ffffff" stroke-opacity="0.5" stroke-width="1"/>
<line x1="693.5" y1="379.96" x2="898" y2="379.96" stroke="#dcdcdc" stroke-width="1"/>
<line x1="898" y1="379.96" x2="1080" y2="379.96" stroke="#ffffff" stroke-opacity="0.5" stroke-width="1"/>
<line x1="693.5" y1="357.14" x2="898" y2="357.14" stroke="#dcdcdc" stroke-width="1"/>
<line x1="898" y1="357.14" x2="1080" y2="357.14" stroke="#ffffff" stroke-opacity="0.5" stroke-width="1"/>
<line x1="693.5" y1="334.32" x2="898" y2="334.32" stroke="#dcdcdc" stroke-width="1"/>
<line x1="898" y1="334.32" x2="1080" y2="334.32" stroke="#ffffff" stroke-opacity="0.5" stroke-width="1"/>
<line x1="693.5" y1="311.50" x2="898" y2="311.50" stroke="#dcdcdc" stroke-width="1"/>
<line x1="898" y1="311.50" x2="1080" y2="311.50" stroke="#ffffff" stroke-opacity="0.5" stroke-width="1"/>
<line x1="693.5" y1="288.68" x2="898" y2="288.68" stroke="#dcdcdc" stroke-width="1"/>
<line x1="898" y1="288.68" x2="1080" y2="288.68" stroke="#ffffff" stroke-opacity="0.5" stroke-width="1"/>
<line x1="693.5" y1="265.86" x2="898" y2="265.86" stroke="#dcdcdc" stroke-width="1"/>
<line x1="898" y1="265.86" x2="1080" y2="265.86" stroke="#ffffff" stroke-opacity="0.5" stroke-width="1"/>
<line x1="693.5" y1="243.04" x2="898" y2="243.04" stroke="#dcdcdc" stroke-width="1"/>
<line x1="898" y1="243.04" x2="1080" y2="243.04" stroke="#ffffff" stroke-opacity="0.5" stroke-width="1"/>
<line x1="693.5" y1="220.22" x2="898" y2="220.22" stroke="#dcdcdc" stroke-width="1"/>
<line x1="898" y1="220.22" x2="1080" y2="220.22" stroke="#ffffff" stroke-opacity="0.5" stroke-width="1"/>
<line x1="693.5" y1="197.40" x2="898" y2="197.40" stroke="#dcdcdc" stroke-width="1"/>
<line x1="898" y1="197.40" x2="1080" y2="197.40" stroke="#ffffff" stroke-opacity="0.5" stroke-width="1"/>
<line x1="730.40" y1="194.90000000000003" x2="730.40" y2="473.74" stroke="#dcdcdc" stroke-width="1"/>
<line x1="791.20" y1="194.90000000000003" x2="791.20" y2="473.74" stroke="#dcdcdc" stroke-width="1"/>
<line x1="852.10" y1="194.90000000000003" x2="852.10" y2="473.74" stroke="#dcdcdc" stroke-width="1"/>
<line x1="912.90" y1="194.90000000000003" x2="912.90" y2="197.40000000000003" stroke="#dcdcdc" stroke-width="1"/>
<line x1="912.90" y1="197.40000000000003" x2="912.90" y2="471.24" stroke="#ffffff" stroke-opacity="0.42" stroke-width="1"/>
<line x1="912.90" y1="471.24" x2="912.90" y2="473.74" stroke="#dcdcdc" stroke-width="1"/>
<line x1="973.70" y1="194.90000000000003" x2="973.70" y2="197.40000000000003" stroke="#dcdcdc" stroke-width="1"/>
<line x1="973.70" y1="197.40000000000003" x2="973.70" y2="471.24" stroke="#ffffff" stroke-opacity="0.42" stroke-width="1"/>
<line x1="973.70" y1="471.24" x2="973.70" y2="473.74" stroke="#dcdcdc" stroke-width="1"/>
<line x1="1035.50" y1="194.90000000000003" x2="1035.50" y2="197.40000000000003" stroke="#dcdcdc" stroke-width="1"/>
<line x1="1035.50" y1="197.40000000000003" x2="1035.50" y2="471.24" stroke="#ffffff" stroke-opacity="0.42" stroke-width="1"/>
<line x1="1035.50" y1="471.24" x2="1035.50" y2="473.74" stroke="#dcdcdc" stroke-width="1"/>
<line x1="693.5" y1="197.40000000000003" x2="693.5" y2="471.24" stroke="#d4d4d4" stroke-width="1"/>
<line x1="895" y1="197.40000000000003" x2="895" y2="471.24" stroke="#dc9ede" stroke-width="1.6" stroke-dasharray="3.3 3.6"/>
<text transform="translate(904.60 231.50) rotate(-90)" x="0" y="0" font-family="Liberation Sans" font-size="8.7" fill="#4f86cc" dominant-baseline="central">5338.33</text>
<text transform="translate(959.00 231.50) rotate(-90)" x="0" y="0" font-family="Liberation Sans" font-size="8.7" fill="#98c6e8" dominant-baseline="central">5382.73</text>
<text transform="translate(1057.30 231.50) rotate(-90)" x="0" y="0" font-family="Liberation Sans" font-size="8.7" fill="#98c6e8" dominant-baseline="central">5471.53</text>
<text transform="translate(889.30 469.80) rotate(-90)" x="0" y="0" font-family="Liberation Sans" font-size="8.7" fill="#b054c0" dominant-baseline="central">5335.26</text>
<line x1="693.5" y1="425.4" x2="1080" y2="425.4" stroke="#303030" stroke-width="1"/>
<path d="M693.5 420.3 C 760 413, 850 402, 930 400.3 S 1040 405, 1080 409.6" fill="none" stroke="#f06a6a" stroke-width="1"/>
<path d="M693.5 417 C 760 412, 850 407, 930 405.8 S 1040 409, 1080 411.9" fill="none" stroke="#f06a6a" stroke-width="1"/>
<rect x="975" y="411.9" width="38.3" height="7" fill="#c89898" fill-opacity="0.85"/>
<path d="M693.5 415.6 C 800 413.5, 900 412.8, 975 415.2 S 1050 418, 1080 420.3" fill="none" stroke="#7aea7a" stroke-width="1"/>
<path d="M693.5 415.6 C 800 413.5, 900 412.8, 975 415.2 S 1050 416.5, 1080 417.5" fill="none" stroke="#30e030" stroke-width="1.8"/>
<polyline points="693.5,433 912.4,433 1004.4,262.7 1080,402.3" fill="none" stroke="#4646cc" stroke-width="1.4" stroke-linejoin="miter"/>
<polyline points="693.5,449 882,449 1004.4,221 1080,362" fill="none" stroke="#108a10" stroke-width="1.6" stroke-linejoin="miter"/>
<circle cx="974.8" cy="415.2" r="2.9" fill="#2ee6f0" stroke="#1a3a4a" stroke-width="0.9"/>
<rect x="697.8" y="201.8" width="138.9" height="104.9" rx="4" fill="#eef2f9" fill-opacity="0.95" stroke="#9ea8b8" stroke-width="1"/>
</svg>
<div class="r" style="left:704.50px;top:209.90px;width:2.30px;height:9.00px;background:#e83838;"></div>
<div class="t" style="left:707.40px;top:210.90px;font-size:9px;line-height:9px;color:#555;font-weight:normal;"><span style="color:#5a5a5a">-4.80 Realized PnL</span></div>
<div class="r" style="left:704.50px;top:221.50px;width:2.30px;height:9.00px;background:#5acc5a;"></div>
<div class="t" style="left:707.40px;top:222.50px;font-size:9px;line-height:9px;color:#555;font-weight:normal;"><span style="color:#505050">+1 </span><span style="color:#5a60e8">30ago. 5525 Put Δ</span></div>
<div class="t" style="left:804.90px;top:222.50px;font-size:9px;line-height:9px;color:#5a60e8;font-weight:normal;">-64.27</div>
<div class="r" style="left:704.50px;top:233.10px;width:2.30px;height:9.00px;background:#5acc5a;"></div>
<div class="t" style="left:707.40px;top:234.10px;font-size:9px;line-height:9px;color:#555;font-weight:normal;"><span style="color:#505050">-1 </span><span style="color:#f05858">30ago. 5500 Put Δ</span></div>
<div class="t" style="left:802.70px;top:234.10px;font-size:9px;line-height:9px;color:#f05858;font-weight:normal;">-60.36</div>
<div class="r" style="left:704.50px;top:244.70px;width:2.30px;height:9.00px;background:#5acc5a;"></div>
<div class="t" style="left:707.40px;top:245.70px;font-size:9px;line-height:9px;color:#555;font-weight:normal;"><span style="color:#505050">-1 </span><span style="color:#f05858">30ago. 5350 Put Δ</span></div>
<div class="t" style="left:802.70px;top:245.70px;font-size:9px;line-height:9px;color:#f05858;font-weight:normal;">-38.18</div>
<div class="r" style="left:704.50px;top:256.30px;width:2.30px;height:9.00px;background:#5acc5a;"></div>
<div class="t" style="left:707.40px;top:257.30px;font-size:9px;line-height:9px;color:#555;font-weight:normal;"><span style="color:#505050">+1 </span><span style="color:#5a60e8">30ago. 5325 Put Δ</span></div>
<div class="t" style="left:804.90px;top:257.30px;font-size:9px;line-height:9px;color:#5a60e8;font-weight:normal;">-35.07</div>
<div class="r" style="left:704.50px;top:267.90px;width:2.30px;height:9.00px;background:#82a2ea;"></div>
<div class="t" style="left:707.40px;top:268.90px;font-size:9px;line-height:9px;color:#555;font-weight:normal;"><span style="color:#505050">+1 </span><span style="color:#5a60e8">30ago. 5350 Put Δ</span></div>
<div class="t" style="left:804.90px;top:268.90px;font-size:9px;line-height:9px;color:#5a60e8;font-weight:normal;">-38.18</div>
<div class="r" style="left:704.50px;top:279.50px;width:2.30px;height:9.00px;background:#82a2ea;"></div>
<div class="t" style="left:707.40px;top:280.50px;font-size:9px;line-height:9px;color:#555;font-weight:normal;"><span style="color:#505050">+1 </span><span style="color:#5a60e8">30ago. 5500 Put Δ</span></div>
<div class="t" style="left:804.90px;top:280.50px;font-size:9px;line-height:9px;color:#5a60e8;font-weight:normal;">-60.36</div>
<div class="r" style="left:704.50px;top:291.10px;width:2.30px;height:9.00px;background:#82a2ea;"></div>
<div class="t" style="left:707.40px;top:292.10px;font-size:9px;line-height:9px;color:#555;font-weight:normal;"><span style="color:#505050">-2 </span><span style="color:#f05858">30ago. 5425 Put Δ</span></div>
<div class="t" style="left:802.70px;top:292.10px;font-size:9px;line-height:9px;color:#f05858;font-weight:normal;">-48.60</div>
<svg style="left:0;top:0" width="1080" height="675"><rect x="697.9" y="420.7" width="96.8" height="46.9" rx="4" fill="#e8edf6" fill-opacity="0.85" stroke="#9ea8b8" stroke-width="1"/></svg>
<div class="t" style="left:704.60px;top:428.95px;font-size:8.7px;line-height:8.7px;color:#3a8c3a;font-weight:normal;">30/08/2024 (0)</div>
<div class="t" style="left:704.60px;top:440.85px;font-size:8.7px;line-height:8.7px;color:#f07474;font-weight:normal;">12/08/2024 (18) T+18</div>
<div class="t" style="left:704.60px;top:452.45px;font-size:8.7px;line-height:8.7px;color:#6ad46a;font-weight:normal;">25/07/2024 (36) T+0</div>
<div class="t" style="left:781.90px;top:457.05px;font-size:8.7px;line-height:8.7px;color:#9a3aa8;font-weight:normal;">39.3%</div>
<div class="t" style="left:991.70px;top:457.05px;font-size:8.7px;line-height:8.7px;color:#7a2ab0;font-weight:normal;">22.7%</div>
<div class="t" style="left:288.00px;width:400px;text-align:right;top:468.09px;font-size:8.7px;line-height:8.7px;color:#2a2a2a;font-weight:normal;">-616%</div>
<div class="t" style="left:288.00px;width:400px;text-align:right;top:445.27px;font-size:8.7px;line-height:8.7px;color:#2a2a2a;font-weight:normal;">-308%</div>
<div class="t" style="left:288.00px;width:400px;text-align:right;top:422.45px;font-size:8.7px;line-height:8.7px;color:#2a2a2a;font-weight:normal;">0%</div>
<div class="t" style="left:288.00px;width:400px;text-align:right;top:399.63px;font-size:8.7px;line-height:8.7px;color:#2a2a2a;font-weight:normal;">308%</div>
<div class="t" style="left:288.00px;width:400px;text-align:right;top:376.81px;font-size:8.7px;line-height:8.7px;color:#2a2a2a;font-weight:normal;">616%</div>
<div class="t" style="left:288.00px;width:400px;text-align:right;top:353.99px;font-size:8.7px;line-height:8.7px;color:#2a2a2a;font-weight:normal;">924%</div>
<div class="t" style="left:288.00px;width:400px;text-align:right;top:331.17px;font-size:8.7px;line-height:8.7px;color:#2a2a2a;font-weight:normal;">1232%</div>
<div class="t" style="left:288.00px;width:400px;text-align:right;top:308.35px;font-size:8.7px;line-height:8.7px;color:#2a2a2a;font-weight:normal;">1539%</div>
<div class="t" style="left:288.00px;width:400px;text-align:right;top:285.53px;font-size:8.7px;line-height:8.7px;color:#2a2a2a;font-weight:normal;">1847%</div>
<div class="t" style="left:288.00px;width:400px;text-align:right;top:262.71px;font-size:8.7px;line-height:8.7px;color:#2a2a2a;font-weight:normal;">2155%</div>
<div class="t" style="left:288.00px;width:400px;text-align:right;top:239.89px;font-size:8.7px;line-height:8.7px;color:#2a2a2a;font-weight:normal;">2463%</div>
<div class="t" style="left:288.00px;width:400px;text-align:right;top:217.07px;font-size:8.7px;line-height:8.7px;color:#2a2a2a;font-weight:normal;">2771%</div>
<div class="t" style="left:288.00px;width:400px;text-align:right;top:194.25px;font-size:8.7px;line-height:8.7px;color:#2a2a2a;font-weight:normal;">3079%</div>
<div class="r" style="left:652.00px;top:408.70px;width:38.00px;height:11.00px;background:#0b870b;"></div>
<div class="t" style="left:288.00px;width:400px;text-align:right;top:410.75px;font-size:8.7px;line-height:8.7px;color:#ffffff;font-weight:normal;">143%</div>
<div class="t" style="left:530.40px;width:400px;text-align:center;top:185.55px;font-size:8.7px;line-height:8.7px;color:#2a2a2a;font-weight:normal;">-4.2%</div>
<div class="t" style="left:591.20px;width:400px;text-align:center;top:185.55px;font-size:8.7px;line-height:8.7px;color:#2a2a2a;font-weight:normal;">-3.3%</div>
<div class="t" style="left:652.10px;width:400px;text-align:center;top:185.55px;font-size:8.7px;line-height:8.7px;color:#2a2a2a;font-weight:normal;">-2.3%</div>
<div class="t" style="left:712.90px;width:400px;text-align:center;top:185.55px;font-size:8.7px;line-height:8.7px;color:#2a2a2a;font-weight:normal;">-1.4%</div>
<div class="t" style="left:835.50px;width:400px;text-align:center;top:185.55px;font-size:8.7px;line-height:8.7px;color:#2a2a2a;font-weight:normal;">0.4%</div>
<div class="box" style="left:961px;top:182.7px;width:27.4px;height:9.8px;background:#eef2f8;border:1px solid #6a7a98"></div>
<div class="t" style="left:774.70px;width:400px;text-align:center;top:184.15px;font-size:8.7px;line-height:8.7px;color:#2a2a2a;font-weight:normal;">-0.5%</div>
<div class="t" style="left:530.40px;width:400px;text-align:center;top:477.05px;font-size:8.7px;line-height:8.7px;color:#2a2a2a;font-weight:normal;">5200</div>
<div class="t" style="left:591.20px;width:400px;text-align:center;top:477.05px;font-size:8.7px;line-height:8.7px;color:#2a2a2a;font-weight:normal;">5250</div>
<div class="t" style="left:652.10px;width:400px;text-align:center;top:477.05px;font-size:8.7px;line-height:8.7px;color:#2a2a2a;font-weight:normal;">5300</div>
<div class="t" style="left:712.90px;width:400px;text-align:center;top:477.05px;font-size:8.7px;line-height:8.7px;color:#2a2a2a;font-weight:normal;">5350</div>
<div class="t" style="left:835.50px;width:400px;text-align:center;top:477.05px;font-size:8.7px;line-height:8.7px;color:#2a2a2a;font-weight:normal;">5450</div>
<div class="box" style="left:650.3px;top:490.3px;width:440px;height:157.6px;background:#e8eef6;border:1px solid #a0aaba;border-radius:4px"></div>
<div class="t" style="left:472.00px;width:400px;text-align:center;top:510.15px;font-size:8.7px;line-height:8.7px;color:#5a5a5a;font-weight:normal;">PnL</div>
<div class="t" style="left:472.00px;width:400px;text-align:center;top:546.35px;font-size:8.7px;line-height:8.7px;color:#5a5a5a;font-weight:normal;">Delta</div>
<div class="t" style="left:472.00px;width:400px;text-align:center;top:573.95px;font-size:8.7px;line-height:8.7px;color:#5a5a5a;font-weight:normal;">Gamma</div>
<div class="t" style="left:472.00px;width:400px;text-align:center;top:601.05px;font-size:8.7px;line-height:8.7px;color:#5a5a5a;font-weight:normal;">Theta</div>
<div class="t" style="left:472.00px;width:400px;text-align:center;top:628.45px;font-size:8.7px;line-height:8.7px;color:#5a5a5a;font-weight:normal;">Vega</div>
<svg style="left:0;top:0" width="1080" height="675">
<rect x="694.2" y="506.30" width="66.6" height="7.00" fill="#5a7af8" stroke="#4e5564" stroke-width="0.8"/>
<rect x="694.2" y="543.70" width="66.6" height="5.50" fill="#5a7af8" stroke="#4e5564" stroke-width="0.8"/>
<rect x="694.2" y="576.70" width="66.6" height="8.70" fill="#f07a7a" stroke="#4e5564" stroke-width="0.8"/>
<rect x="694.2" y="601.20" width="66.6" height="2.40" fill="#5a7af8" stroke="#4e5564" stroke-width="0.8"/>
<rect x="694.2" y="631.60" width="66.6" height="4.90" fill="#f07a7a" stroke="#4e5564" stroke-width="0.8"/>
<rect x="760.8" y="505.00" width="60.7" height="8.30" fill="#5a7af8" stroke="#4e5564" stroke-width="0.8"/>
<rect x="760.8" y="546.50" width="60.7" height="2.70" fill="#5a7af8" stroke="#4e5564" stroke-width="0.8"/>
<rect x="760.8" y="576.70" width="60.7" height="8.70" fill="#f07a7a" stroke="#4e5564" stroke-width="0.8"/>
<rect x="760.8" y="598.60" width="60.7" height="5.00" fill="#5a7af8" stroke="#4e5564" stroke-width="0.8"/>
<rect x="760.8" y="631.60" width="60.7" height="7.00" fill="#f07a7a" stroke="#4e5564" stroke-width="0.8"/>
<rect x="821.5" y="504.00" width="61.0" height="9.30" fill="#5a7af8" stroke="#4e5564" stroke-width="0.8"/>
<rect x="821.5" y="548.90" width="61.0" height="0.60" fill="#5a7af8" stroke="#4e5564" stroke-width="0.8"/>
<rect x="821.5" y="576.70" width="61.0" height="8.70" fill="#f07a7a" stroke="#4e5564" stroke-width="0.8"/>
<rect x="821.5" y="596.30" width="61.0" height="7.30" fill="#5a7af8" stroke="#4e5564" stroke-width="0.8"/>
<rect x="821.5" y="631.60" width="61.0" height="7.90" fill="#f07a7a" stroke="#4e5564" stroke-width="0.8"/>
<rect x="882.5" y="504.50" width="61.2" height="8.80" fill="#5a7af8" stroke="#4e5564" stroke-width="0.8"/>
<rect x="882.5" y="549.20" width="61.2" height="2.80" fill="#f07a7a" stroke="#4e5564" stroke-width="0.8"/>
<rect x="882.5" y="576.70" width="61.2" height="8.70" fill="#f07a7a" stroke="#4e5564" stroke-width="0.8"/>
<rect x="882.5" y="595.60" width="61.2" height="8.00" fill="#5a7af8" stroke="#4e5564" stroke-width="0.8"/>
<rect x="882.5" y="631.60" width="61.2" height="8.00" fill="#f07a7a" stroke="#4e5564" stroke-width="0.8"/>
<rect x="943.7" y="505.90" width="60.6" height="7.40" fill="#5a7af8" stroke="#4e5564" stroke-width="0.8"/>
<rect x="943.7" y="549.20" width="60.6" height="5.30" fill="#f07a7a" stroke="#4e5564" stroke-width="0.8"/>
<rect x="943.7" y="576.70" width="60.6" height="8.70" fill="#f07a7a" stroke="#4e5564" stroke-width="0.8"/>
<rect x="943.7" y="595.50" width="60.6" height="8.10" fill="#5a7af8" stroke="#4e5564" stroke-width="0.8"/>
<rect x="943.7" y="631.60" width="60.6" height="7.30" fill="#f07a7a" stroke="#4e5564" stroke-width="0.8"/>
<rect x="1004.3" y="508.00" width="61.5" height="5.30" fill="#5a7af8" stroke="#4e5564" stroke-width="0.8"/>
<rect x="1004.3" y="549.20" width="61.5" height="7.10" fill="#f07a7a" stroke="#4e5564" stroke-width="0.8"/>
<rect x="1004.3" y="576.70" width="61.5" height="2.90" fill="#f07a7a" stroke="#4e5564" stroke-width="0.8"/>
<rect x="1004.3" y="596.20" width="61.5" height="7.40" fill="#5a7af8" stroke="#4e5564" stroke-width="0.8"/>
<rect x="1004.3" y="631.60" width="61.5" height="5.70" fill="#f07a7a" stroke="#4e5564" stroke-width="0.8"/>
<rect x="1065.8" y="509.70" width="24.2" height="3.60" fill="#5a7af8" stroke="#4e5564" stroke-width="0.8"/>
<rect x="1065.8" y="549.20" width="24.2" height="8.80" fill="#f07a7a" stroke="#4e5564" stroke-width="0.8"/>
<rect x="1065.8" y="576.70" width="24.2" height="2.50" fill="#f07a7a" stroke="#4e5564" stroke-width="0.8"/>
<rect x="1065.8" y="596.60" width="24.2" height="7.00" fill="#5a7af8" stroke="#4e5564" stroke-width="0.8"/>
<rect x="1065.8" y="631.60" width="24.2" height="4.60" fill="#f07a7a" stroke="#4e5564" stroke-width="0.8"/>
</svg>
<div class="t" style="left:530.40px;width:400px;text-align:center;top:515.15px;font-size:8.7px;line-height:8.7px;color:#6470f0;font-weight:normal;">459</div>
<div class="t" style="left:530.40px;width:400px;text-align:center;top:523.05px;font-size:8.7px;line-height:8.7px;color:#6470f0;font-weight:normal;">141%</div>
<div class="t" style="left:530.40px;width:400px;text-align:center;top:551.55px;font-size:8.7px;line-height:8.7px;color:#6470f0;font-weight:normal;">2.33</div>
<div class="t" style="left:530.40px;width:400px;text-align:center;top:569.55px;font-size:8.7px;line-height:8.7px;color:#f07272;font-weight:normal;">-0.02</div>
<div class="t" style="left:530.40px;width:400px;text-align:center;top:605.65px;font-size:8.7px;line-height:8.7px;color:#6470f0;font-weight:normal;">6.35</div>
<div class="t" style="left:530.40px;width:400px;text-align:center;top:624.25px;font-size:8.7px;line-height:8.7px;color:#f07272;font-weight:normal;">-62.43</div>
<div class="t" style="left:591.20px;width:400px;text-align:center;top:515.15px;font-size:8.7px;line-height:8.7px;color:#6470f0;font-weight:normal;">549</div>
<div class="t" style="left:591.20px;width:400px;text-align:center;top:523.05px;font-size:8.7px;line-height:8.7px;color:#6470f0;font-weight:normal;">169%</div>
<div class="t" style="left:591.20px;width:400px;text-align:center;top:551.55px;font-size:8.7px;line-height:8.7px;color:#6470f0;font-weight:normal;">1.24</div>
<div class="t" style="left:591.20px;width:400px;text-align:center;top:569.55px;font-size:8.7px;line-height:8.7px;color:#f07272;font-weight:normal;">-0.02</div>
<div class="t" style="left:591.20px;width:400px;text-align:center;top:605.65px;font-size:8.7px;line-height:8.7px;color:#6470f0;font-weight:normal;">12.98</div>
<div class="t" style="left:591.20px;width:400px;text-align:center;top:624.25px;font-size:8.7px;line-height:8.7px;color:#f07272;font-weight:normal;">-84.96</div>
<div class="t" style="left:652.10px;width:400px;text-align:center;top:515.15px;font-size:8.7px;line-height:8.7px;color:#6470f0;font-weight:normal;">582</div>
<div class="t" style="left:652.10px;width:400px;text-align:center;top:523.05px;font-size:8.7px;line-height:8.7px;color:#6470f0;font-weight:normal;">179%</div>
<div class="t" style="left:652.10px;width:400px;text-align:center;top:551.55px;font-size:8.7px;line-height:8.7px;color:#6470f0;font-weight:normal;">0.03</div>
<div class="t" style="left:652.10px;width:400px;text-align:center;top:569.55px;font-size:8.7px;line-height:8.7px;color:#f07272;font-weight:normal;">-0.02</div>
<div class="t" style="left:652.10px;width:400px;text-align:center;top:605.65px;font-size:8.7px;line-height:8.7px;color:#6470f0;font-weight:normal;">18.05</div>
<div class="t" style="left:652.10px;width:400px;text-align:center;top:624.25px;font-size:8.7px;line-height:8.7px;color:#f07272;font-weight:normal;">-98.20</div>
<div class="t" style="left:712.90px;width:400px;text-align:center;top:515.15px;font-size:8.7px;line-height:8.7px;color:#6470f0;font-weight:normal;">553</div>
<div class="t" style="left:712.90px;width:400px;text-align:center;top:523.05px;font-size:8.7px;line-height:8.7px;color:#6470f0;font-weight:normal;">170%</div>
<div class="t" style="left:712.90px;width:400px;text-align:center;top:542.15px;font-size:8.7px;line-height:8.7px;color:#f07272;font-weight:normal;">-1.16</div>
<div class="t" style="left:712.90px;width:400px;text-align:center;top:569.55px;font-size:8.7px;line-height:8.7px;color:#f07272;font-weight:normal;">-0.02</div>
<div class="t" style="left:712.90px;width:400px;text-align:center;top:605.65px;font-size:8.7px;line-height:8.7px;color:#6470f0;font-weight:normal;">20.93</div>
<div class="t" style="left:712.90px;width:400px;text-align:center;top:624.25px;font-size:8.7px;line-height:8.7px;color:#f07272;font-weight:normal;">-100.31</div>
<div class="t" style="left:835.50px;width:400px;text-align:center;top:515.15px;font-size:8.7px;line-height:8.7px;color:#6470f0;font-weight:normal;">336</div>
<div class="t" style="left:835.50px;width:400px;text-align:center;top:523.05px;font-size:8.7px;line-height:8.7px;color:#6470f0;font-weight:normal;">104%</div>
<div class="t" style="left:835.50px;width:400px;text-align:center;top:542.15px;font-size:8.7px;line-height:8.7px;color:#f07272;font-weight:normal;">-3.01</div>
<div class="t" style="left:835.50px;width:400px;text-align:center;top:569.55px;font-size:8.7px;line-height:8.7px;color:#f07272;font-weight:normal;">-0.01</div>
<div class="t" style="left:835.50px;width:400px;text-align:center;top:605.65px;font-size:8.7px;line-height:8.7px;color:#6470f0;font-weight:normal;">19.70</div>
<div class="t" style="left:835.50px;width:400px;text-align:center;top:624.25px;font-size:8.7px;line-height:8.7px;color:#f07272;font-weight:normal;">-74.00</div>
<div class="box" style="left:953.8px;top:475.4px;width:42px;height:171.3px;background:rgba(238,242,249,0.8);border:1px solid #8a96ac;border-radius:4px"></div>
<div class="t" style="left:774.60px;width:400px;text-align:center;top:477.25px;font-size:8.7px;line-height:8.7px;color:#1a1a1a;font-weight:normal;">5401.10</div>
<div class="t" style="left:774.80px;width:400px;text-align:center;top:515.15px;font-size:8.7px;line-height:8.7px;color:rgba(120,130,220,0.22);font-weight:normal;">459</div>
<div class="t" style="left:774.80px;width:400px;text-align:center;top:523.05px;font-size:8.7px;line-height:8.7px;color:rgba(120,130,220,0.22);font-weight:normal;">144%</div>
<div class="t" style="left:774.80px;width:400px;text-align:center;top:542.15px;font-size:8.7px;line-height:8.7px;color:rgba(230,110,110,0.22);font-weight:normal;">-2.21</div>
<div class="t" style="left:774.80px;width:400px;text-align:center;top:569.55px;font-size:8.7px;line-height:8.7px;color:rgba(230,110,110,0.22);font-weight:normal;">-0.02</div>
<div class="t" style="left:774.80px;width:400px;text-align:center;top:605.65px;font-size:8.7px;line-height:8.7px;color:rgba(120,130,220,0.22);font-weight:normal;">21.40</div>
<div class="t" style="left:774.80px;width:400px;text-align:center;top:624.25px;font-size:8.7px;line-height:8.7px;color:rgba(230,110,110,0.22);font-weight:normal;">-91.52</div>
<div class="t" style="left:774.80px;width:400px;text-align:center;top:505.40px;font-size:9.6px;line-height:9.6px;color:#3444ee;font-weight:normal;letter-spacing:-0.172px;">465</div>
<div class="t" style="left:774.80px;width:400px;text-align:center;top:518.40px;font-size:9.6px;line-height:9.6px;color:#3444ee;font-weight:normal;letter-spacing:-0.593px;">143.3%</div>
<div class="t" style="left:774.80px;width:400px;text-align:center;top:545.90px;font-size:9.6px;line-height:9.6px;color:#ee2a2a;font-weight:normal;letter-spacing:-0.076px;">-2.23</div>
<div class="t" style="left:774.80px;width:400px;text-align:center;top:573.90px;font-size:9.6px;line-height:9.6px;color:#ee2a2a;font-weight:normal;letter-spacing:-0.076px;">-0.02</div>
<div class="t" style="left:774.80px;width:400px;text-align:center;top:599.90px;font-size:9.6px;line-height:9.6px;color:#3444ee;font-weight:normal;letter-spacing:-0.404px;">21.38</div>
<div class="t" style="left:774.80px;width:400px;text-align:center;top:627.80px;font-size:9.6px;line-height:9.6px;color:#ee2a2a;font-weight:normal;letter-spacing:-0.203px;">-91.22</div>
<div class="r" style="left:646.00px;top:650.30px;width:434.00px;height:20.70px;background:#283651;"></div>
<div class="t" style="left:1038.40px;top:656.50px;font-size:10.4px;line-height:10.4px;color:#e2e6ee;font-weight:normal;">440%</div>
<div class="t" style="left:1074.00px;top:656.00px;font-size:10.4px;line-height:10.4px;color:#e2e6ee;font-weight:normal;">-</div>
</body></html>
